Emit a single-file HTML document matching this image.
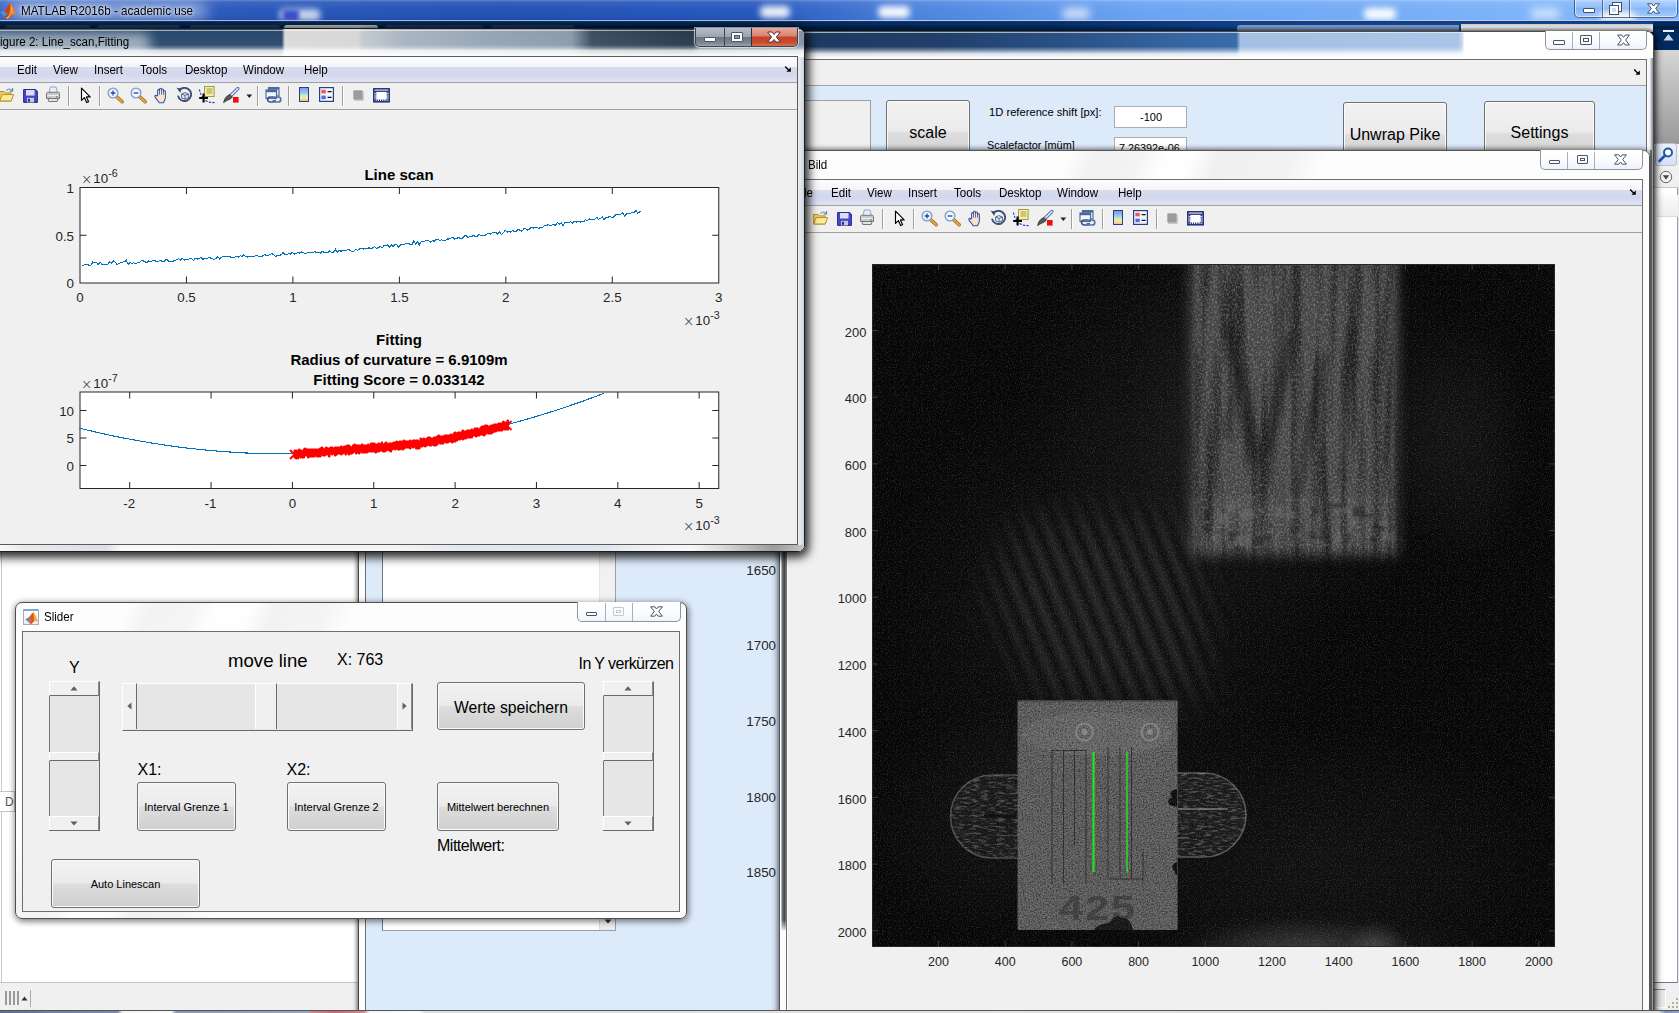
<!DOCTYPE html><html><head><meta charset="utf-8"><title>MATLAB R2016b - academic use</title><style>
*{box-sizing:border-box;margin:0;padding:0}
html,body{width:1679px;height:1013px;overflow:hidden;background:#fff}
body{position:relative;font-family:"Liberation Sans",sans-serif;font-size:12px;color:#000}
.a{position:absolute}
.t{position:absolute;white-space:nowrap;line-height:1}
.ui{font-family:"Liberation Sans","DejaVu Sans",sans-serif;font-size:12.3px;transform:scaleX(.94);transform-origin:0 50%}
.menu{background:linear-gradient(#fdfdfe 0,#f4f5fb 38%,#d9dcef 42%,#d3d7ec 70%,#dfe3f3 100%)}
.btn{position:absolute;border:1px solid #707070;border-radius:3px;background:linear-gradient(#f2f2f2 0,#ebebeb 48%,#dddddd 52%,#cfcfcf 100%);box-shadow:inset 0 0 0 1px #fbfbfb;text-align:center;white-space:nowrap}
.tick{position:absolute;white-space:nowrap;line-height:1;font-size:13.33px;color:#262626}
.sep{position:absolute;width:1px;background:#a0a0a0;box-shadow:1px 0 0 #fff}
</style></head><body>
<div class="a" id="mtitle" style="left:0;top:0;width:1679px;height:22px;background:linear-gradient(90deg,#3563c4 0,#2857bb 12%,#1f4fb4 30%,#2456bb 45%,#4b83de 55%,#69a2f3 68%,#76aef8 85%,#86bafb 100%)"></div>
<div class="a" style="left:0;top:0;width:1679px;height:22px;background:linear-gradient(rgba(255,255,255,.3) 0,rgba(255,255,255,.1) 9%,rgba(255,255,255,.03) 40%,rgba(255,255,255,0) 100%)"></div>
<div class="a" style="left:280px;top:9px;width:40px;height:12px;border-radius:4px;background:#fff;filter:blur(3px);opacity:.75"></div>
<div class="a" style="left:283px;top:10px;width:16px;height:11px;background:#1a2fc0;filter:blur(2px);opacity:.8"></div>
<div class="a" style="left:760px;top:6px;width:30px;height:12px;border-radius:5px;background:#fff;filter:blur(3px);opacity:.9"></div>
<div class="a" style="left:878px;top:6px;width:32px;height:12px;border-radius:5px;background:#fff;filter:blur(3px);opacity:.95"></div>
<div class="a" style="left:1062px;top:8px;width:28px;height:11px;border-radius:5px;background:#fff;filter:blur(4px);opacity:.7"></div>
<div class="a" style="left:1364px;top:8px;width:32px;height:12px;border-radius:5px;background:#fff;filter:blur(3px);opacity:.95"></div>
<div class="a" style="left:1530px;top:8px;width:30px;height:11px;border-radius:5px;background:#fff;filter:blur(4px);opacity:.6"></div>
<div class="a" style="left:1600px;top:11px;width:36px;height:11px;border-radius:6px;background:#fffff0;filter:blur(3px);opacity:.9"></div>
<div class="a" style="left:8px;top:1px;width:200px;height:20px;border-radius:10px;background:#fff;filter:blur(7px);opacity:.42"></div>
<svg class="a" style="left:0px;top:3px" width="17" height="17" viewBox="0 0 17 17"><path d="M0 9.5 L4 7.5 L7.5 11 L4.5 13.5Z" fill="#4a8fd0"/><path d="M4 7.5 C7 5 8.5 1 10.5 0.5 C12 0.5 13.5 6 16.5 12.5 C14.5 11 13 10.5 11.5 12 C10 13.5 9 15.5 7 16 L4.5 13.5 L7.5 11Z" fill="#c9421b"/><path d="M10.5 0.5 C12 0.5 13.5 6 16.5 12.5 C14.5 11 13 10.5 11.5 12 C10 13.5 9 15.5 7 16 C10 11 10.6 5 10.5 0.5Z" fill="#f08a2c"/><path d="M10.6 1.5 C11.6 4 12 7 11.6 11 C11 8 11 4 10.6 1.5Z" fill="#f9c23a"/><path d="M7 16 L6 14.8 C7.5 14 8.5 13 9.5 11.8 C9 13.5 8.3 15 7 16Z" fill="#f9c23a"/></svg>
<div class="t ui" style="left:21px;top:5px;font-size:12.4px;color:#000;text-shadow:0 0 6px rgba(255,255,255,.9),0 0 3px rgba(255,255,255,.8)">MATLAB R2016b - academic use</div>
<div class="a" style="left:1574px;top:-3px;width:104px;height:21px;border:1px solid rgba(40,60,110,.75);border-radius:0 0 5px 5px;background:linear-gradient(rgba(255,255,255,.35),rgba(255,255,255,.12) 45%,rgba(120,170,240,.15) 55%,rgba(255,255,255,.25));box-shadow:inset 0 0 0 1px rgba(255,255,255,.55)"></div>
<div class="a" style="left:1602px;top:0;width:1px;height:17px;background:rgba(40,60,110,.7);box-shadow:1px 0 0 rgba(255,255,255,.5)"></div>
<div class="a" style="left:1629px;top:0;width:1px;height:17px;background:rgba(40,60,110,.7);box-shadow:1px 0 0 rgba(255,255,255,.5)"></div>
<div class="a" style="left:1583px;top:8px;width:12px;height:5px;background:#fff;border:1px solid #44506b;border-radius:1px"></div>
<div class="a" style="left:1613px;top:3px;width:8px;height:8px;background:transparent;border:2px solid #fff;outline:1px solid #44506b"></div>
<div class="a" style="left:1610px;top:6px;width:8px;height:8px;background:#bfe0ff;border:2px solid #fff;outline:1px solid #44506b"></div>
<svg class="a" style="left:1647px;top:3px" width="13" height="11" viewBox="0 0 13 11"><path d="M.6 .8h4.2l1.7 2.2L8.2 .8h4.2L8.7 5.5l3.7 4.7H8.2L6.5 8 4.8 10.2H.6l3.7-4.7Z" fill="#fff" stroke="#44506b" stroke-width="1"/></svg>

<div class="a" style="left:0;top:22px;width:1679px;height:28px;background:#022a5e"></div>
<div class="a" style="left:0;top:20px;width:1679px;height:1px;background:rgba(200,212,238,.85)"></div><div class="a" style="left:0;top:21px;width:1679px;height:1px;background:#1a3566"></div>
<div class="a" style="left:0;top:26px;width:1679px;height:3px;background:#06182e;opacity:.55"></div>
<div class="a" style="left:5px;top:25px;width:85px;height:4px;border-radius:3px 3px 0 0;background:#23405f"></div><div class="a" style="left:97px;top:25px;width:83px;height:4px;border-radius:3px 3px 0 0;background:#23405f"></div><div class="a" style="left:190px;top:25px;width:90px;height:4px;border-radius:3px 3px 0 0;background:#23405f"></div><div class="a" style="left:284px;top:25px;width:94px;height:4px;border-radius:3px 3px 0 0;background:#d9d9d9"></div><div class="a" style="left:385px;top:25px;width:99px;height:4px;border-radius:3px 3px 0 0;background:#23405f"></div><div class="a" style="left:491px;top:25px;width:84px;height:4px;border-radius:3px 3px 0 0;background:#23405f"></div>
<div class="a" style="left:804px;top:22px;width:849px;height:9px;background:linear-gradient(90deg,rgba(15,69,150,0) 0,rgba(15,69,150,.25) 30%,rgba(15,69,150,.9) 52%,rgba(15,69,150,1) 100%)"></div>
<div class="a" style="left:1237px;top:25px;width:222px;height:7px;background:#7f9cc4;border-radius:3px 0 0 0"></div>
<div class="a" style="left:1461px;top:24px;width:192px;height:8px;background:linear-gradient(#c9c9c9,#f4f4f4 40%,#fff)"></div>
<!-- MATLAB right strip -->
<div class="a" style="left:1653px;top:50px;width:26px;height:94px;background:linear-gradient(#d6d6d6,#bdbdbd 40%,#999 100%)"></div>
<div class="a" style="left:1663px;top:30px;width:11px;height:2px;background:#e8eef5"></div>
<svg class="a" style="left:1663px;top:34px" width="11" height="7"><path d="M5.5 0L10.5 6.5H.5Z" fill="#c9d6e4"/></svg>
<div class="a" style="left:1653px;top:144px;width:26px;height:44px;background:#f0f0f0"></div>
<div class="a" style="left:1655px;top:143px;width:22px;height:23px;border:1px solid #b9c3d3;border-radius:3px;background:linear-gradient(#eaf1fb,#d5e1f3)"></div>
<svg class="a" style="left:1657px;top:146px" width="18" height="18" viewBox="0 0 18 18"><circle cx="11" cy="6.5" r="4" fill="#fff" stroke="#1f55b5" stroke-width="2"/><path d="M8 9.5L2.5 15" stroke="#1f55b5" stroke-width="2.6" stroke-linecap="round"/></svg>
<svg class="a" style="left:1659px;top:170px" width="14" height="14" viewBox="0 0 14 14"><circle cx="7" cy="7" r="5.7" fill="#f4f4f4" stroke="#666" stroke-width="1"/><path d="M3.8 5.2h6.4L7 9.8Z" fill="#444"/></svg>
<div class="a" style="left:1653px;top:187px;width:25px;height:796px;background:#fff;border-right:1px solid #8f9bb3;border-bottom:1px solid #6d7b95"></div>
<div class="a" style="left:1653px;top:187px;width:26px;height:1px;background:#c8c8c8"></div>
<div class="a" style="left:1657px;top:195px;width:21px;height:22px;background:linear-gradient(#fbfbfb,#ededed);border-bottom:1px solid #ddd"></div>
<div class="a" style="left:1678px;top:187px;width:1px;height:796px;background:#e8e8e8"></div>
<div class="a" style="left:1653px;top:983px;width:26px;height:27px;background:#f0f0f0"></div>
<div class="a" style="left:1653px;top:989px;width:13px;height:19px;background:#e9e9e9;border-top:1px solid #888;border-right:1px solid #fff;border-bottom:1px solid #fff"></div>
<div class="a" style="left:1676px;top:998px;width:2px;height:2px;background:#b8b094"></div><div class="a" style="left:1672px;top:1002px;width:2px;height:2px;background:#b8b094"></div><div class="a" style="left:1676px;top:1002px;width:2px;height:2px;background:#b8b094"></div><div class="a" style="left:1668px;top:1006px;width:2px;height:2px;background:#b8b094"></div><div class="a" style="left:1672px;top:1006px;width:2px;height:2px;background:#b8b094"></div><div class="a" style="left:1676px;top:1006px;width:2px;height:2px;background:#b8b094"></div>
<!-- MATLAB left-bottom panels -->
<div class="a" style="left:0;top:540px;width:360px;height:443px;background:#fff"></div>
<div class="a" style="left:1px;top:540px;width:1px;height:443px;background:#c9c9c9"></div>
<div class="a" style="left:0;top:791px;width:15px;height:21px;background:#fff;border:1px solid #c4c4c4;border-left:0"></div>
<div class="t" style="left:5px;top:796px;font-size:12px;color:#555">D</div>
<div class="a" style="left:0;top:982px;width:360px;height:1px;background:#c6c6c6"></div>
<div class="a" style="left:0;top:983px;width:360px;height:27px;background:#f0f0f0"></div>
<div class="a" style="left:5px;top:991px;width:15px;height:14px;background:repeating-linear-gradient(90deg,#9a9a9a 0,#9a9a9a 2px,transparent 2px,transparent 4px)"></div>
<svg class="a" style="left:21px;top:996px" width="7" height="5"><path d="M3.5 .5L6.5 4.5H.5Z" fill="#333"/></svg>
<div class="a" style="left:30px;top:990px;width:1px;height:17px;background:#aaa"></div>

<div class="a" id="gui" style="left:358px;top:31px;width:1296px;height:990px;border-radius:7px 7px 0 0;box-shadow:0 0 0 1px rgba(40,40,40,.0),-1px 0 5px rgba(0,0,0,.32),3px 0 6px rgba(0,0,0,.55),0 -1px 4px rgba(0,0,0,.4)"></div>
<div class="a" style="left:358px;top:31px;width:1296px;height:990px;border:1px solid #4a4a4a;border-radius:7px 7px 0 0;background:#fdfdfd;overflow:hidden">
  <div class="a" style="left:0;top:0;width:1296px;height:28px;background:linear-gradient(90deg,#1d3a60 0,#1d3a60 34.5%,#20406b 45%,#2a5286 55%,#3767a2 64%,#3c6ca8 67.7%,#a3c0e3 68%,#a9c5e7 84.8%,#c5d8ef 85.1%,#fff 85.3%,#fff 100%)"></div>
  <div class="a" style="left:0;top:0;width:1296px;height:28px;background:linear-gradient(rgba(255,255,255,0) 0,rgba(255,255,255,0) 52%,rgba(255,255,255,.4) 66%,rgba(255,255,255,.85) 78%,rgba(255,255,255,.97) 90%,#fff 100%)"></div>
  <div class="a" style="left:0;top:0;width:1296px;height:1px;background:rgba(255,255,255,.6)"></div>
</div>
<!-- right frame two-tone -->
<div class="a" style="left:1647px;top:58px;width:6px;height:92px;background:linear-gradient(90deg,#fff 0,#f6f8fb 35%,#dde1e8 55%,#a9adb4 78%,#85888e 100%)"></div><div class="a" style="left:1647px;top:150px;width:6px;height:860px;background:linear-gradient(90deg,#fff 0,#f4f6fa 30%,#c9cdd4 45%,#7a7a7a 55%,#686868 76%,#a0a0a0 86%,#b4b4b4 100%)"></div>
<!-- caption buttons -->
<div class="a" style="left:1545px;top:31px;width:102px;height:19px;border:1px solid #8d93a0;border-top:0;border-radius:0 0 5px 5px;background:linear-gradient(#fff,#fbfcfe 50%,#eef2f9 100%)"></div>
<div class="a" style="left:1572px;top:32px;width:1px;height:17px;background:#a9aeb9"></div>
<div class="a" style="left:1599px;top:32px;width:1px;height:17px;background:#a9aeb9"></div>
<div class="a" style="left:1553px;top:40px;width:12px;height:5px;background:#fcfcfc;border:1px solid #4c5366;border-radius:1px"></div>
<div class="a" style="left:1580px;top:35px;width:12px;height:10px;border:1px solid #4c5366;border-radius:1px;background:#fcfcfc"></div>
<div class="a" style="left:1583px;top:38px;width:6px;height:4px;border:1px solid #4c5366;background:#fff"></div>
<svg class="a" style="left:1617px;top:34px" width="13" height="12" viewBox="0 0 13 12"><path d="M.6 1h4.2l1.7 2.3L8.2 1h4.2L8.7 6l3.7 5H8.2L6.5 8.7 4.8 11H.6l3.7-5Z" fill="#fdfdfd" stroke="#4c5366" stroke-width="1"/></svg>
<!-- client -->
<div class="a" style="left:365px;top:59px;width:1282px;height:960px;border:1px solid #6e6e6e;background:#ddeafa"></div>
<div class="a" style="left:366px;top:60px;width:1280px;height:25px;background:#f0f0f0"></div>
<div class="a" style="left:366px;top:85px;width:1280px;height:1px;background:#a0a0a0"></div>
<svg class="a" style="left:1633px;top:68px" width="8" height="8" viewBox="0 0 8 8"><path d="M1.2 1.6L5 5.4" stroke="#000" stroke-width="1.4" fill="none"/><path d="M2.4 6.8H6.8V2.4Z" fill="#000"/></svg>
<!-- panel + buttons -->
<div class="a" style="left:700px;top:100px;width:171px;height:60px;background:#f0f0f0;border:1px solid #fff;box-shadow:-1px -1px 0 #a0a0a0 inset, 0 0 0 1px #a0a0a0 inset;border-right:1px solid #fff"></div>
<div class="a" style="left:700px;top:100px;width:171px;height:60px;border-top:1px solid #a0a0a0;border-right:1px solid #a0a0a0;background:#f0f0f0"></div>
<div class="btn" style="left:886px;top:100px;width:84px;height:64px;font-size:16px;line-height:64px">scale</div>
<div class="t" style="left:989px;top:107px;font-size:11.2px">1D reference shift [px]:</div>
<div class="a" style="left:1114px;top:106px;width:73px;height:22px;background:#fff;border:1px solid #abadb3"></div>
<div class="t" style="left:1140px;top:112px;font-size:11px">-100</div>
<div class="t" style="left:987px;top:140px;font-size:10.9px">Scalefactor [müm]</div>
<div class="a" style="left:1114px;top:137px;width:73px;height:22px;background:#fff;border:1px solid #abadb3"></div>
<div class="t" style="left:1119px;top:143px;font-size:10.8px">7.26392e-06</div>
<div class="btn" style="left:1343px;top:102px;width:104px;height:64px;font-size:16px;line-height:64px">Unwrap Pike</div>
<div class="btn" style="left:1484px;top:101px;width:111px;height:64px;font-size:16px;line-height:62px">Settings</div>
<!-- left part below fig2 -->
<div class="a" style="left:382px;top:540px;width:234px;height:391px;background:#fff;border:1px solid #6f7684;border-right-color:#9aa0ab;border-bottom-color:#9aa0ab"></div>
<div class="a" style="left:599px;top:540px;width:16px;height:375px;background:#f1f1f1;border-left:1px solid #e4e4e4"></div>
<div class="a" style="left:599px;top:915px;width:16px;height:15px;background:linear-gradient(#f6f6f6,#ebebeb);border-left:1px solid #dcdcdc"></div>
<svg class="a" style="left:603.5px;top:919px" width="8" height="5"><path d="M.5 .5H7.5L4 4.5Z" fill="#333"/></svg>
<div class="tick" style="right:903px;top:564px">1650</div><div class="tick" style="right:903px;top:639px">1700</div><div class="tick" style="right:903px;top:715px">1750</div><div class="tick" style="right:903px;top:791px">1800</div><div class="tick" style="right:903px;top:866px">1850</div>
<div class="a" style="left:779px;top:150px;width:871px;height:871px;border-radius:7px 7px 0 0;box-shadow:-2px 0 6px rgba(0,0,0,.4),0 -1px 4px rgba(0,0,0,.35)"></div>
<div class="a" style="left:779px;top:150px;width:871px;height:871px;border:1px solid #555;border-radius:7px 7px 0 0;background:#fdfdfd;overflow:hidden">
  <div class="a" style="left:0;top:0;width:871px;height:29px;background:linear-gradient(115deg,#fdfdfd 0,#fdfdfd 33%,#f1f1f1 36%,#f3f3f3 41%,#fefefe 44%,#fefefe 47%,#f0f0f0 50%,#f2f2f2 58%,#fdfdfd 62%,#fdfdfd 100%)"></div>
  <div class="a" style="left:1px;top:391px;width:5px;height:388px;background:linear-gradient(90deg,#d9dbde 0,#70757d 25%,#3c3e42 80%,#9a9a9a 100%)"></div>
  <div class="a" style="left:1px;top:769px;width:5px;height:12px;background:linear-gradient(rgba(255,255,255,0),#fafafa)"></div>
</div>
<div class="t ui" style="left:808px;top:159px">Bild</div>
<!-- caption buttons -->
<div class="a" style="left:1540px;top:150px;width:103px;height:20px;border:1px solid #8d93a0;border-top:0;border-radius:0 0 5px 5px;background:linear-gradient(#fff,#fbfcfe 50%,#eef2f9 100%)"></div>
<div class="a" style="left:1567px;top:152px;width:1px;height:17px;background:#a9aeb9"></div>
<div class="a" style="left:1594px;top:152px;width:1px;height:17px;background:#a9aeb9"></div>
<div class="a" style="left:1549px;top:160px;width:11px;height:4px;background:#fcfcfc;border:1px solid #4c5366;border-radius:1px"></div>
<div class="a" style="left:1577px;top:155px;width:11px;height:9px;border:1px solid #4c5366;border-radius:1px;background:#fcfcfc"></div>
<div class="a" style="left:1580px;top:158px;width:5px;height:3px;border:1px solid #4c5366;background:#fff"></div>
<svg class="a" style="left:1614px;top:154px" width="13" height="11" viewBox="0 0 13 11"><path d="M.6 .8h4.2l1.7 2.2L8.2 .8h4.2L8.7 5.5l3.7 4.7H8.2L6.5 8 4.8 10.2H.6l3.7-4.7Z" fill="#fdfdfd" stroke="#4c5366" stroke-width="1"/></svg>
<!-- client -->
<div class="a" style="left:786px;top:179px;width:857px;height:840px;border:1px solid #6e6e6e;background:#f0f0f0"></div>
<div class="a" style="left:787px;top:180px;width:1px;height:830px;background:#fff"></div>
<div class="a menu" style="left:787px;top:180px;width:855px;height:25px"></div>
<div class="a" style="left:787px;top:205px;width:855px;height:1px;background:#a0a0a0"></div>
<div class="a" style="left:787px;top:232px;width:855px;height:1px;background:#a0a0a0"></div>
<div class="t ui" style="left:803.5px;top:187px">le</div>
<div class="t ui" style="left:830.5px;top:187px">Edit</div><div class="t ui" style="left:867px;top:187px">View</div><div class="t ui" style="left:907.5px;top:187px">Insert</div><div class="t ui" style="left:953.5px;top:187px">Tools</div><div class="t ui" style="left:998.5px;top:187px">Desktop</div><div class="t ui" style="left:1057px;top:187px">Window</div><div class="t ui" style="left:1118px;top:187px">Help</div>
<svg class="a" style="left:1629px;top:188px" width="8" height="8" viewBox="0 0 8 8"><path d="M1.2 1.6L5 5.4" stroke="#000" stroke-width="1.4" fill="none"/><path d="M2.4 6.8H6.8V2.4Z" fill="#000"/></svg>
<div class="a" style="left:800px;top:209px;width:2px;height:20px;background:#3f3f8f;opacity:.5"></div>
<svg class="a" style="left:813px;top:210px" width="16" height="16" viewBox="0 0 16 16"><path d="M.6 4.5h4.6l1.3 1.4H12V14H.6Z" fill="#f0cf62" stroke="#b98f1f" stroke-width="1"/><path d="M.8 14L3 7.6H14.6L12.3 14Z" fill="#fbe9a0" stroke="#b98f1f" stroke-width="1"/><path d="M7.5 3.6C9 1.6 11.6 1.4 13 3.6M13.6 .9v3.2h-3.1" fill="none" stroke="#6a8fc0" stroke-width="1.2"/></svg><svg class="a" style="left:837px;top:211px" width="15" height="16" viewBox="0 0 15 16"><path d="M.6 1.5H12.6L14.4 3.2V14.4H.6Z" fill="#4545c9" stroke="#2a2a86" stroke-width="1"/><rect x="3" y="2" width="8.5" height="5.5" fill="#f2f2ff"/><rect x="3" y="2" width="8.5" height="5.5" fill="#9a9ae0" opacity=".25"/><rect x="4" y="9.8" width="7" height="4.6" fill="#c9c9dc"/><rect x="5" y="10.8" width="2" height="3" fill="#2a2a86"/></svg><svg class="a" style="left:859px;top:209px" width="16" height="17" viewBox="0 0 16 17"><path d="M4.2 6.5L5.3 1H11L12.5 6.5Z" fill="#e6f0fb" stroke="#93a6bf" stroke-width="1"/><path d="M1.5 7.5C1.5 6 3 6.3 8 6.3S14.5 6 14.5 7.5V12.5H1.5Z" fill="#c9c9c9" stroke="#767676" stroke-width="1"/><path d="M2.5 9.5h11" stroke="#eee" stroke-width="1"/><path d="M3 12.5h10l-.8 3H3.8Z" fill="#e4e4e4" stroke="#767676" stroke-width="1"/><rect x="11.2" y="10.3" width="1.8" height="1.3" fill="#4a4"/></svg><div class="sep" style="left:882px;top:209px;height:20px"></div><svg class="a" style="left:894px;top:210px" width="12" height="17" viewBox="0 0 12 17"><path d="M1.5 1.2V13.4L4.4 10.6L6.6 15.6L8.6 14.7L6.4 9.9H10.2Z" fill="#fff" stroke="#000" stroke-width="1.15" stroke-linejoin="round"/></svg><div class="sep" style="left:913px;top:209px;height:20px"></div><svg class="a" style="left:921px;top:210px" width="17" height="17" viewBox="0 0 17 17"><path d="M9.2 9.2L15.2 14.8" stroke="#8a6a2a" stroke-width="3.4" stroke-linecap="round"/><path d="M9.2 9.2L15.2 14.8" stroke="#e8a33a" stroke-width="2.2" stroke-linecap="round"/><circle cx="6" cy="6" r="4.9" fill="#e3effc" stroke="#7d9dcb" stroke-width="1.3"/><circle cx="6" cy="6" r="3.4" fill="#f4f9ff"/><path d="M3.6 6h4.8M6 3.6v4.8" stroke="#2546a5" stroke-width="1.3"/></svg><svg class="a" style="left:944px;top:210px" width="17" height="17" viewBox="0 0 17 17"><path d="M9.2 9.2L15.2 14.8" stroke="#8a6a2a" stroke-width="3.4" stroke-linecap="round"/><path d="M9.2 9.2L15.2 14.8" stroke="#e8a33a" stroke-width="2.2" stroke-linecap="round"/><circle cx="6" cy="6" r="4.9" fill="#e3effc" stroke="#7d9dcb" stroke-width="1.3"/><circle cx="6" cy="6" r="3.4" fill="#f4f9ff"/><path d="M3.6 6h4.8" stroke="#2546a5" stroke-width="1.3"/></svg><svg class="a" style="left:967px;top:209.5px" width="17" height="17" viewBox="0 0 17 17"><path d="M4.6 8.8V3.6c0-1.3 1.9-1.3 1.9 0V2.3c0-1.3 2-1.3 2 0V2.9c0-1.3 2-1.3 2 0V4.6c0-1.2 1.9-1.2 1.9 0v5.6c0 2.7-1.2 3.6-1.9 5.6H6.2C5.3 13.6 2.6 11.6 1.9 9.8c-.5-1.2 1-1.9 1.8-.9Z" fill="#fbe0cc" stroke="#2d55a5" stroke-width="1.05" stroke-linejoin="round"/><path d="M6.5 3.6v4M8.5 3v4.6M10.5 4.6v3" stroke="#2d55a5" stroke-width=".8" fill="none"/></svg><svg class="a" style="left:990px;top:210px" width="17" height="17" viewBox="0 0 17 17"><path d="M3.6 3A6.6 6.6 0 1 1 2 8.6" fill="none" stroke="#3b4f77" stroke-width="1.9"/><path d="M.6 .8L5.6 1.6 4.2 6Z" fill="#3b4f77"/><path d="M5.6 7L9 5.6l3.4 1.4v3.8L9 12.2 5.6 10.8Z" fill="#e8eef8" stroke="#51668f" stroke-width="1"/><path d="M5.6 7L9 8.4l3.4-1.4M9 8.4v3.8" fill="none" stroke="#51668f" stroke-width="1"/></svg><svg class="a" style="left:1012px;top:209px" width="18" height="18" viewBox="0 0 18 18"><rect x="6.5" y=".5" width="9.6" height="10" fill="#f5f0a6" stroke="#a39a45" stroke-width="1"/><path d="M8.5 3h5.8M8.5 5h5.8M8.5 7h5.8" stroke="#a39a45" stroke-width="1"/><path d="M1.4 3.5C2.2 7 3.3 9.5 5 11.5" fill="none" stroke="#2222dd" stroke-width="1.1" stroke-dasharray="2 1.4"/><path d="M7.5 14.6C10 16 13 16.6 16.5 16.6" fill="none" stroke="#2222dd" stroke-width="1.1" stroke-dasharray="2.4 1.2"/><path d="M5.6 7.6v8.8M1.2 12h8.8" stroke="#000" stroke-width="2.1"/></svg><svg class="a" style="left:1036px;top:210px" width="18" height="17" viewBox="0 0 18 17"><path d="M15.8 1.6L8.6 8.8" stroke="#3f5f9f" stroke-width="3.4" stroke-linecap="round"/><path d="M15.8 1.6L8.6 8.8" stroke="#d9e6fb" stroke-width="1.8" stroke-linecap="round" stroke-dasharray="1.6 1.3"/><path d="M8 7.6L10.4 10C8.4 13 5.6 12.4 1.6 15.6 2.4 12 4 9 8 7.6Z" fill="#5a5a5a" stroke="#2c2c2c" stroke-width=".8"/><rect x="11" y="10" width="5.6" height="5.6" fill="#f20d0d"/></svg><svg class="a" style="left:1060px;top:217px" width="7" height="5" viewBox="0 0 7 5"><path d="M.4 .5H6.2L3.3 4Z" fill="#222"/></svg><div class="sep" style="left:1071px;top:209px;height:20px"></div><svg class="a" style="left:1079px;top:210px" width="17" height="17" viewBox="0 0 17 17"><rect x="3.5" y=".6" width="10.5" height="8.4" fill="#dfe9f6" stroke="#4a66a0" stroke-width="1.1"/><rect x="3.5" y=".6" width="10.5" height="2" fill="#4a66a0"/><rect x="1" y="3" width="10.5" height="8.4" fill="#f4f8fd" stroke="#4a66a0" stroke-width="1.1"/><rect x="1" y="3" width="10.5" height="2.2" fill="#4a66a0"/><rect x="2.6" y="10" width="7.6" height="5" rx="2.5" fill="none" stroke="#395587" stroke-width="1.7"/><rect x="8.2" y="10" width="7.6" height="5" rx="2.5" fill="none" stroke="#5576ad" stroke-width="1.7"/><path d="M6 12.5h6" stroke="#dfe9f6" stroke-width="1"/></svg><div class="sep" style="left:1102px;top:209px;height:20px"></div><div class="a" style="left:1113px;top:210px;width:10px;height:15px;border:1px solid #2a3f8a;background:linear-gradient(#8f8fe8,#8fd0ee 38%,#d8ecb8 60%,#f6e79a 78%,#f6bca0)"></div><svg class="a" style="left:1133px;top:210px" width="15" height="15" viewBox="0 0 15 15"><rect x=".6" y=".6" width="13.8" height="13.8" fill="#f2f6fc" stroke="#2a3f8a" stroke-width="1.2"/><rect x="2.4" y="2.8" width="4.4" height="3.6" fill="#ee5555"/><rect x="2.4" y="8.6" width="4.4" height="3.6" fill="#5a6be0"/><path d="M8.6 4.6h4M8.6 10.4h4" stroke="#111" stroke-width="1.3"/></svg><div class="sep" style="left:1156px;top:209px;height:20px"></div><div class="a" style="left:1167px;top:213px;width:10px;height:10px;background:#9b9b9b;border:1px solid #b4b4b4;border-radius:1.5px;box-shadow:1px 1px 0 #c8c8c8"></div><svg class="a" style="left:1187px;top:211px" width="17" height="15" viewBox="0 0 17 15"><rect x=".8" y=".8" width="15.4" height="13" fill="#fff" stroke="#1c2d78" stroke-width="1.5"/><path d="M1 3.2h15" stroke="#1c2d78" stroke-width="1.3"/><path d="M2.6 4v8M14.4 4v8" stroke="#1c2d78" stroke-width="1.6" stroke-dasharray="1.2 1"/><path d="M1.5 12.2h14" stroke="#1c2d78" stroke-width="1.4" stroke-dasharray="1.2 1"/></svg><svg class="a" style="left:872px;top:264px" width="683" height="683" viewBox="0 0 683 683"><defs>
<filter id="nz" x="0" y="0" width="100%" height="100%"><feTurbulence type="fractalNoise" baseFrequency="0.85" numOctaves="2" seed="3" result="n"/><feColorMatrix in="n" type="matrix" values="0 0 0 0 1  0 0 0 0 1  0 0 0 0 1  3.2 0 0 0 -1.55"/></filter>
<filter id="nz2" x="0" y="0" width="100%" height="100%"><feTurbulence type="fractalNoise" baseFrequency="0.7" numOctaves="2" seed="11" result="n"/><feColorMatrix in="n" type="matrix" values="0 0 0 0 0  0 0 0 0 0  0 0 0 0 0  2.2 0 0 0 -0.8"/></filter>
<filter id="streak" x="0" y="0" width="100%" height="100%"><feTurbulence type="fractalNoise" baseFrequency="0.10 0.007" numOctaves="2" seed="5" result="n"/><feColorMatrix in="n" type="matrix" values="0 0 0 0 0  0 0 0 0 0  0 0 0 0 0  3.0 0 0 0 -1.15"/></filter>
<filter id="nz4" x="0" y="0" width="100%" height="100%"><feTurbulence type="fractalNoise" baseFrequency="0.55 0.4" numOctaves="2" seed="8" result="n"/><feColorMatrix in="n" type="matrix" values="0 0 0 0 1  0 0 0 0 1  0 0 0 0 1  3 0 0 0 -1.3"/></filter><filter id="b3" x="-50%" y="-50%" width="200%" height="200%"><feGaussianBlur stdDeviation="3"/></filter>
<filter id="b1" x="-50%" y="-50%" width="200%" height="200%"><feGaussianBlur stdDeviation="1.3"/></filter><filter id="b6" x="-50%" y="-50%" width="200%" height="200%"><feGaussianBlur stdDeviation="6"/></filter>
<clipPath id="cimg"><rect x="0" y="0" width="683" height="683"/></clipPath>
<clipPath id="cbr"><rect x="305" y="0" width="230" height="320"/></clipPath>
<clipPath id="clobes"><path d="M150 511H120A41.5 41.5 0 0 0 120 594H150ZM300 509H332A42 42 0 0 1 332 593H300Z"/></clipPath><filter id="nz3" x="0" y="0" width="100%" height="100%"><feTurbulence type="fractalNoise" baseFrequency="0.12 0.45" numOctaves="3" seed="21" result="n"/><feColorMatrix in="n" type="matrix" values="0 0 0 0 .8  0 0 0 0 .8  0 0 0 0 .8  4 0 0 0 -1.9"/></filter><clipPath id="cchip"><rect x="145" y="436" width="160" height="230"/></clipPath>
<radialGradient id="rg1"><stop offset="0" stop-color="#fff" stop-opacity=".04"/><stop offset=".55" stop-color="#fff" stop-opacity=".022"/><stop offset="1" stop-color="#fff" stop-opacity="0"/></radialGradient>
<radialGradient id="rg3"><stop offset="0" stop-color="#fff" stop-opacity=".16"/><stop offset=".5" stop-color="#fff" stop-opacity=".08"/><stop offset="1" stop-color="#fff" stop-opacity="0"/></radialGradient><radialGradient id="rg2"><stop offset="0" stop-color="#fff" stop-opacity=".05"/><stop offset=".5" stop-color="#fff" stop-opacity=".03"/><stop offset="1" stop-color="#fff" stop-opacity="0"/></radialGradient>
<linearGradient id="brx" x1="0" y1="0" x2="1" y2="0"><stop offset="0" stop-color="#fff" stop-opacity="0"/><stop offset=".1" stop-color="#fff" stop-opacity="1"/><stop offset=".9" stop-color="#fff" stop-opacity="1"/><stop offset="1" stop-color="#fff" stop-opacity="0"/></linearGradient>
<linearGradient id="bry" x1="0" y1="0" x2="0" y2="1"><stop offset="0" stop-color="#000" stop-opacity="0"/><stop offset=".9" stop-color="#0b0b0b" stop-opacity="0"/><stop offset="1" stop-color="#0b0b0b" stop-opacity="1"/></linearGradient>
<mask id="mbr"><rect x="318" y="-30" width="208" height="322" fill="#fff" filter="url(#b6)"/></mask>
<linearGradient id="fr" gradientUnits="userSpaceOnUse" x1="0" y1="0" x2="16.3" y2="-6.7" spreadMethod="repeat"><stop offset="0" stop-color="#fff" stop-opacity="0"/><stop offset=".5" stop-color="#fff" stop-opacity=".1"/><stop offset="1" stop-color="#fff" stop-opacity="0"/></linearGradient>
<radialGradient id="frm" cx="225" cy="350" r="175" gradientUnits="userSpaceOnUse" gradientTransform="translate(225 350) rotate(22) scale(.75 1.1) translate(-225 -350)"><stop offset="0" stop-color="#fff"/><stop offset=".6" stop-color="#fff" stop-opacity=".8"/><stop offset="1" stop-color="#fff" stop-opacity="0"/></radialGradient>
<filter id="b20" x="-50%" y="-50%" width="200%" height="200%"><feGaussianBlur stdDeviation="22"/></filter><mask id="mfr"><path d="M150 250L300 250L340 330L330 440L170 440L110 330Z" fill="#fff" filter="url(#b20)"/></mask>
</defs>
<g clip-path="url(#cimg)">
<rect width="683" height="683" fill="#060606"/>
<!-- soft glows -->
<ellipse cx="235" cy="345" rx="230" ry="230" fill="url(#rg1)"/>
<ellipse cx="330" cy="130" rx="190" ry="170" fill="url(#rg1)"/>
<ellipse cx="590" cy="175" rx="70" ry="130" fill="url(#rg2)"/>
<ellipse cx="440" cy="600" rx="260" ry="140" fill="url(#rg1)"/>
<ellipse cx="450" cy="690" rx="170" ry="45" fill="url(#rg2)"/>
<ellipse cx="430" cy="688" rx="120" ry="34" fill="url(#rg3)"/><ellipse cx="505" cy="686" rx="30" ry="30" fill="url(#rg3)"/>
<ellipse cx="130" cy="560" rx="140" ry="120" fill="url(#rg1)"/>
<!-- bright textured region -->
<ellipse cx="422" cy="150" rx="170" ry="220" fill="url(#rg2)"/>
<g mask="url(#mbr)">
<rect x="300" y="0" width="240" height="320" fill="#424242"/>
<rect x="300" y="232" width="240" height="52" fill="#484848"/>
<g clip-path="url(#cbr)"><rect x="300" y="0" width="240" height="310" fill="#000" filter="url(#streak)" opacity=".5"/><rect x="300" y="0" width="240" height="320" filter="url(#nz4)" opacity=".22"/></g>
<g filter="url(#b1)"><rect x="442" y="265" width="12" height="10" fill="#1c1c1c" opacity=".45"/><rect x="463" y="271" width="4" height="7" fill="#6a6a6a" opacity=".45"/><rect x="500" y="261" width="13" height="5" fill="#1c1c1c" opacity=".45"/><rect x="414" y="247" width="9" height="7" fill="#6a6a6a" opacity=".45"/><rect x="332" y="246" width="7" height="9" fill="#1c1c1c" opacity=".45"/><rect x="468" y="244" width="12" height="5" fill="#6a6a6a" opacity=".45"/><rect x="441" y="243" width="4" height="9" fill="#1c1c1c" opacity=".45"/><rect x="368" y="246" width="14" height="9" fill="#6a6a6a" opacity=".45"/><rect x="382" y="273" width="9" height="8" fill="#1c1c1c" opacity=".45"/><rect x="367" y="272" width="11" height="10" fill="#6a6a6a" opacity=".45"/><rect x="491" y="249" width="8" height="5" fill="#1c1c1c" opacity=".45"/><rect x="356" y="240" width="7" height="8" fill="#6a6a6a" opacity=".45"/><rect x="331" y="262" width="7" height="6" fill="#1c1c1c" opacity=".45"/><rect x="477" y="255" width="7" height="7" fill="#6a6a6a" opacity=".45"/><rect x="457" y="240" width="14" height="4" fill="#1c1c1c" opacity=".45"/><rect x="465" y="268" width="4" height="9" fill="#6a6a6a" opacity=".45"/><rect x="396" y="259" width="4" height="4" fill="#1c1c1c" opacity=".45"/><rect x="363" y="272" width="6" height="9" fill="#6a6a6a" opacity=".45"/><rect x="497" y="272" width="7" height="6" fill="#1c1c1c" opacity=".45"/><rect x="424" y="266" width="5" height="8" fill="#6a6a6a" opacity=".45"/><rect x="474" y="269" width="4" height="10" fill="#1c1c1c" opacity=".45"/><rect x="346" y="250" width="10" height="10" fill="#6a6a6a" opacity=".45"/><rect x="391" y="271" width="9" height="6" fill="#1c1c1c" opacity=".45"/><rect x="387" y="244" width="5" height="5" fill="#6a6a6a" opacity=".45"/><rect x="454" y="274" width="6" height="4" fill="#1c1c1c" opacity=".45"/><rect x="508" y="257" width="8" height="5" fill="#6a6a6a" opacity=".45"/><rect x="437" y="268" width="9" height="7" fill="#1c1c1c" opacity=".45"/><rect x="340" y="271" width="4" height="7" fill="#6a6a6a" opacity=".45"/><rect x="481" y="243" width="11" height="10" fill="#1c1c1c" opacity=".45"/><rect x="443" y="266" width="5" height="7" fill="#6a6a6a" opacity=".45"/><rect x="357" y="268" width="7" height="7" fill="#1c1c1c" opacity=".45"/><rect x="510" y="269" width="14" height="7" fill="#6a6a6a" opacity=".45"/><rect x="418" y="264" width="9" height="6" fill="#1c1c1c" opacity=".45"/><rect x="403" y="243" width="8" height="10" fill="#6a6a6a" opacity=".45"/></g><path d="M356 60L385 200" stroke="#0a0a0a" stroke-width="9" opacity="0.55" filter="url(#b3)"/><path d="M420 70L395 190" stroke="#0a0a0a" stroke-width="8" opacity="0.5" filter="url(#b3)"/><path d="M452 90L425 230" stroke="#0a0a0a" stroke-width="7" opacity="0.45" filter="url(#b3)"/><path d="M372 100L352 175" stroke="#0a0a0a" stroke-width="6" opacity="0.4" filter="url(#b3)"/><path d="M480 60L470 220" stroke="#0a0a0a" stroke-width="6" opacity="0.35" filter="url(#b3)"/><path d="M405 40L412 120" stroke="#0a0a0a" stroke-width="5" opacity="0.35" filter="url(#b3)"/></g>
<!-- diagonal fringes -->
<g mask="url(#mfr)"><rect x="60" y="170" width="340" height="340" fill="url(#fr)"/></g>
<!-- lobes -->
<path d="M150 511H120A41.5 41.5 0 0 0 120 594H150Z" fill="#161616" stroke="#484848" stroke-width="1.6"/>
<path d="M300 509H332A42 42 0 0 1 332 593H300Z" fill="#181818" stroke="#555" stroke-width="1.6"/>
<g clip-path="url(#clobes)"><rect x="70" y="500" width="320" height="100" filter="url(#nz3)" opacity=".24"/></g>
<path d="M306 545h50" stroke="#9a9a9a" stroke-width="1.2"/><path d="M112 552h36" stroke="#0c0c0c" stroke-width="3"/>
<rect x="145.5" y="436.5" width="160" height="229.5" fill="#696969"/>
<g clip-path="url(#cchip)"><rect x="145" y="436" width="160" height="230" filter="url(#nz2)" opacity=".5"/>
<ellipse cx="225" cy="470" rx="75" ry="22" fill="#fff" opacity=".05"/>
<circle cx="212.5" cy="468" r="8.5" fill="none" stroke="#808080" stroke-width="2.2"/><circle cx="212.5" cy="468" r="3" fill="#858585"/><circle cx="212.5" cy="468" r="14" fill="none" stroke="#6c6c6c" stroke-width="1.5" opacity=".7"/>
<circle cx="278" cy="468" r="8.5" fill="none" stroke="#808080" stroke-width="2.2"/><circle cx="278" cy="468" r="3" fill="#858585"/><circle cx="278" cy="468" r="14" fill="none" stroke="#6c6c6c" stroke-width="1.5" opacity=".7"/>
<circle cx="212.5" cy="468" r="17" fill="none" stroke="#fff" stroke-width="1.2" opacity="0.056"/><circle cx="212.5" cy="468" r="21" fill="none" stroke="#fff" stroke-width="1.2" opacity="0.048"/><circle cx="212.5" cy="468" r="25" fill="none" stroke="#fff" stroke-width="1.2" opacity="0.040"/><circle cx="212.5" cy="468" r="29" fill="none" stroke="#fff" stroke-width="1.2" opacity="0.032"/><circle cx="212.5" cy="468" r="33" fill="none" stroke="#fff" stroke-width="1.2" opacity="0.024"/><circle cx="212.5" cy="468" r="37" fill="none" stroke="#fff" stroke-width="1.2" opacity="0.020"/><circle cx="212.5" cy="468" r="41" fill="none" stroke="#fff" stroke-width="1.2" opacity="0.020"/><circle cx="212.5" cy="468" r="45" fill="none" stroke="#fff" stroke-width="1.2" opacity="0.020"/><circle cx="278" cy="468" r="17" fill="none" stroke="#fff" stroke-width="1.2" opacity="0.056"/><circle cx="278" cy="468" r="21" fill="none" stroke="#fff" stroke-width="1.2" opacity="0.048"/><circle cx="278" cy="468" r="25" fill="none" stroke="#fff" stroke-width="1.2" opacity="0.040"/><circle cx="278" cy="468" r="29" fill="none" stroke="#fff" stroke-width="1.2" opacity="0.032"/><circle cx="278" cy="468" r="33" fill="none" stroke="#fff" stroke-width="1.2" opacity="0.024"/><circle cx="278" cy="468" r="37" fill="none" stroke="#fff" stroke-width="1.2" opacity="0.020"/><circle cx="278" cy="468" r="41" fill="none" stroke="#fff" stroke-width="1.2" opacity="0.020"/><circle cx="278" cy="468" r="45" fill="none" stroke="#fff" stroke-width="1.2" opacity="0.020"/><path d="M180 486.5h34M180 486v134M191.5 486v134M202.5 486v96M214 486v134M236 483v131M248 483v131M259.5 483v131M237 615h34M271 588v32" stroke="#262626" stroke-width="1" fill="none" opacity=".85"/>
<text x="186" y="656" font-family="Liberation Mono, monospace" font-size="36" font-weight="bold" fill="#2e2e2e" opacity=".6" textLength="78" lengthAdjust="spacingAndGlyphs">425</text>
<path d="M222 666c4-7 10-5 16-8 4-6 8-8 11-4 6-1 10 3 12 12Z" fill="#171717"/>
<path d="M305.5 525c-7 1-9 5-5 8-6 2-6 8 1 9 2 1 3 0 4 0ZM305.5 598c-5 1-7 6-3 9 0 3 1 4 3 4Z" fill="#0e0e0e"/>
<path d="M145.5 436.5h160" stroke="#3c3c3c" stroke-width="2"/>
</g>
<path d="M221.5 488V608" stroke="#1be21b" stroke-width="2.2"/>
<path d="M255 488V608" stroke="#1be21b" stroke-width="1.5"/>
<rect width="683" height="683" filter="url(#nz)" opacity=".13"/>
</g>
<rect x=".5" y=".5" width="682" height="682" fill="none" stroke="#262626" stroke-width="1"/>
<path d="M66.5 683v-6M66.5 0v6M0 66.5h6M683 66.5h-6" stroke="#3c3c3c" stroke-width="1"/><path d="M133.2 683v-6M133.2 0v6M0 133.2h6M683 133.2h-6" stroke="#3c3c3c" stroke-width="1"/><path d="M199.9 683v-6M199.9 0v6M0 199.9h6M683 199.9h-6" stroke="#3c3c3c" stroke-width="1"/><path d="M266.6 683v-6M266.6 0v6M0 266.6h6M683 266.6h-6" stroke="#3c3c3c" stroke-width="1"/><path d="M333.3 683v-6M333.3 0v6M0 333.3h6M683 333.3h-6" stroke="#3c3c3c" stroke-width="1"/><path d="M400.0 683v-6M400.0 0v6M0 400.0h6M683 400.0h-6" stroke="#3c3c3c" stroke-width="1"/><path d="M466.7 683v-6M466.7 0v6M0 466.7h6M683 466.7h-6" stroke="#3c3c3c" stroke-width="1"/><path d="M533.4 683v-6M533.4 0v6M0 533.4h6M683 533.4h-6" stroke="#3c3c3c" stroke-width="1"/><path d="M600.1 683v-6M600.1 0v6M0 600.1h6M683 600.1h-6" stroke="#3c3c3c" stroke-width="1"/><path d="M666.8 683v-6M666.8 0v6M0 666.8h6M683 666.8h-6" stroke="#3c3c3c" stroke-width="1"/></svg><div class="tick" style="right:812.7px;top:326.6px;font-size:12.9px">200</div><div class="tick" style="left:908.5px;width:60px;text-align:center;top:955.5px;font-size:12.5px">200</div><div class="tick" style="right:812.7px;top:393.3px;font-size:12.9px">400</div><div class="tick" style="left:975.2px;width:60px;text-align:center;top:955.5px;font-size:12.5px">400</div><div class="tick" style="right:812.7px;top:460.0px;font-size:12.9px">600</div><div class="tick" style="left:1041.9px;width:60px;text-align:center;top:955.5px;font-size:12.5px">600</div><div class="tick" style="right:812.7px;top:526.7px;font-size:12.9px">800</div><div class="tick" style="left:1108.6px;width:60px;text-align:center;top:955.5px;font-size:12.5px">800</div><div class="tick" style="right:812.7px;top:593.4px;font-size:12.9px">1000</div><div class="tick" style="left:1175.3px;width:60px;text-align:center;top:955.5px;font-size:12.5px">1000</div><div class="tick" style="right:812.7px;top:660.1px;font-size:12.9px">1200</div><div class="tick" style="left:1242.0px;width:60px;text-align:center;top:955.5px;font-size:12.5px">1200</div><div class="tick" style="right:812.7px;top:726.8px;font-size:12.9px">1400</div><div class="tick" style="left:1308.7px;width:60px;text-align:center;top:955.5px;font-size:12.5px">1400</div><div class="tick" style="right:812.7px;top:793.5px;font-size:12.9px">1600</div><div class="tick" style="left:1375.4px;width:60px;text-align:center;top:955.5px;font-size:12.5px">1600</div><div class="tick" style="right:812.7px;top:860.2px;font-size:12.9px">1800</div><div class="tick" style="left:1442.1px;width:60px;text-align:center;top:955.5px;font-size:12.5px">1800</div><div class="tick" style="right:812.7px;top:926.9px;font-size:12.9px">2000</div><div class="tick" style="left:1508.8px;width:60px;text-align:center;top:955.5px;font-size:12.5px">2000</div>
<div class="a" style="left:-10px;top:28px;width:815px;height:524px;border-radius:7px;box-shadow:0 2px 12px 2px rgba(0,0,0,.75),3px 4px 9px rgba(0,0,0,.5)"></div>
<div class="a" style="left:-10px;top:28px;width:815px;height:524px;border:1px solid #1d1d1d;border-radius:7px;overflow:hidden;background:#dfe6ee">
  <div class="a" style="left:9px;top:0;width:805px;height:29px;background:linear-gradient(90deg,#27476b 0,#28486c 35%,#dadada 35.4%,#d6d6d6 44.5%,#c4cad2 45%,#a9b5c2 50%,#96a5b5 60%,#8a9aab 71%,#3a4d60 73.5%,#26394b 86%,#6b7b8a 87%,#8394a5 100%)"></div>
  <div class="a" style="left:0;top:0;width:814px;height:29px;background:linear-gradient(rgba(255,255,255,.0) 0,rgba(255,255,255,.04) 55%,rgba(255,255,255,.35) 66%,rgba(255,255,255,.8) 74%,rgba(255,255,255,.93) 88%,rgba(255,255,255,.97) 100%)"></div>
  <div class="a" style="left:0;top:1px;width:814px;height:1px;background:rgba(255,255,255,.55)"></div>
  <div class="a" style="left:-30px;top:4px;width:190px;height:22px;border-radius:11px;background:rgba(255,255,255,.55);filter:blur(6px)"></div>
  <!-- right frame -->
  <div class="a" style="left:806px;top:28px;width:7px;height:495px;background:linear-gradient(90deg,#eef1f5,#dfe5ec 60%,#c9d1da)"></div>
  <div class="a" style="left:0;top:516px;width:815px;height:7px;background:linear-gradient(90deg,#fff 0,#e8eaee 4%,#dcdfe4 14%,#f8f8f8 16%,#f4f4f4 50%,#e4e8f0 57%,#dde5f1 75%,#e9edf3 78%,#f7f7f7 86%,#d8d8d8 90%,#9c9c9c 96%,#c8c8c8 100%)"></div>
</div>
<div class="t ui" style="left:0;top:36px;font-size:12.3px">igure 2: Line_scan,Fitting</div>
<!-- caption buttons -->
<div class="a" style="left:695px;top:28px;width:103px;height:19px;border:1px solid #3c4653;border-top:0;border-radius:0 0 5px 5px;overflow:hidden;box-shadow:0 0 0 1px rgba(255,255,255,.55)">
  <div class="a" style="left:0;top:0;width:28px;height:19px;background:linear-gradient(#b6bec8 0,#9aa4b0 45%,#6b7785 50%,#7d8996 80%,#a4aeb9 100%)"></div>
  <div class="a" style="left:28px;top:0;width:27px;height:19px;background:linear-gradient(#b6bec8 0,#9aa4b0 45%,#6b7785 50%,#7d8996 80%,#a4aeb9 100%);border-left:1px solid #3c4653"></div>
  <div class="a" style="left:55px;top:0;width:48px;height:19px;background:linear-gradient(#e8a99b 0,#d98471 40%,#c5432a 50%,#c64a30 75%,#dd7d55 100%);border-left:1px solid #3c2a2a"></div>
</div>
<div class="a" style="left:704px;top:37px;width:12px;height:5px;background:#fff;border:1px solid #4a5565;border-radius:1px"></div>
<div class="a" style="left:731px;top:32px;width:12px;height:10px;border:1px solid #4a5565;border-radius:1px;background:#fff"></div>
<div class="a" style="left:734px;top:35px;width:6px;height:4px;border:1px solid #4a5565;background:#8a95a3"></div>
<svg class="a" style="left:767px;top:31px" width="14" height="12" viewBox="0 0 14 12"><path d="M.6 1h4.4l2 2.5L9 1h4.4L9.4 6l4 5H9L7 8.5 5 11H.6l4-5Z" fill="#fff" stroke="#5a3030" stroke-width="1"/></svg>
<!-- client -->
<div class="a" style="left:-2px;top:56px;width:800px;height:489px;border:1px solid #5a5a5a;background:#f0f0f0"></div>
<div class="a menu" style="left:0;top:57px;width:797px;height:25px"></div>
<div class="a" style="left:0;top:82px;width:797px;height:1px;background:#a0a0a0"></div>
<div class="a" style="left:0;top:109px;width:797px;height:1px;background:#a0a0a0"></div>
<div class="t ui" style="left:16.5px;top:64px">Edit</div><div class="t ui" style="left:53px;top:64px">View</div><div class="t ui" style="left:93.5px;top:64px">Insert</div><div class="t ui" style="left:139.5px;top:64px">Tools</div><div class="t ui" style="left:184.5px;top:64px">Desktop</div><div class="t ui" style="left:243px;top:64px">Window</div><div class="t ui" style="left:304px;top:64px">Help</div>
<svg class="a" style="left:784px;top:65px" width="8" height="8" viewBox="0 0 8 8"><path d="M1.2 1.6L5 5.4" stroke="#000" stroke-width="1.4" fill="none"/><path d="M2.4 6.8H6.8V2.4Z" fill="#000"/></svg>
<svg class="a" style="left:-1px;top:87px" width="16" height="16" viewBox="0 0 16 16"><path d="M.6 4.5h4.6l1.3 1.4H12V14H.6Z" fill="#f0cf62" stroke="#b98f1f" stroke-width="1"/><path d="M.8 14L3 7.6H14.6L12.3 14Z" fill="#fbe9a0" stroke="#b98f1f" stroke-width="1"/><path d="M7.5 3.6C9 1.6 11.6 1.4 13 3.6M13.6 .9v3.2h-3.1" fill="none" stroke="#6a8fc0" stroke-width="1.2"/></svg><svg class="a" style="left:23px;top:88px" width="15" height="16" viewBox="0 0 15 16"><path d="M.6 1.5H12.6L14.4 3.2V14.4H.6Z" fill="#4545c9" stroke="#2a2a86" stroke-width="1"/><rect x="3" y="2" width="8.5" height="5.5" fill="#f2f2ff"/><rect x="3" y="2" width="8.5" height="5.5" fill="#9a9ae0" opacity=".25"/><rect x="4" y="9.8" width="7" height="4.6" fill="#c9c9dc"/><rect x="5" y="10.8" width="2" height="3" fill="#2a2a86"/></svg><svg class="a" style="left:45px;top:86px" width="16" height="17" viewBox="0 0 16 17"><path d="M4.2 6.5L5.3 1H11L12.5 6.5Z" fill="#e6f0fb" stroke="#93a6bf" stroke-width="1"/><path d="M1.5 7.5C1.5 6 3 6.3 8 6.3S14.5 6 14.5 7.5V12.5H1.5Z" fill="#c9c9c9" stroke="#767676" stroke-width="1"/><path d="M2.5 9.5h11" stroke="#eee" stroke-width="1"/><path d="M3 12.5h10l-.8 3H3.8Z" fill="#e4e4e4" stroke="#767676" stroke-width="1"/><rect x="11.2" y="10.3" width="1.8" height="1.3" fill="#4a4"/></svg><div class="sep" style="left:68px;top:86px;height:20px"></div><svg class="a" style="left:80px;top:87px" width="12" height="17" viewBox="0 0 12 17"><path d="M1.5 1.2V13.4L4.4 10.6L6.6 15.6L8.6 14.7L6.4 9.9H10.2Z" fill="#fff" stroke="#000" stroke-width="1.15" stroke-linejoin="round"/></svg><div class="sep" style="left:99px;top:86px;height:20px"></div><svg class="a" style="left:107px;top:87px" width="17" height="17" viewBox="0 0 17 17"><path d="M9.2 9.2L15.2 14.8" stroke="#8a6a2a" stroke-width="3.4" stroke-linecap="round"/><path d="M9.2 9.2L15.2 14.8" stroke="#e8a33a" stroke-width="2.2" stroke-linecap="round"/><circle cx="6" cy="6" r="4.9" fill="#e3effc" stroke="#7d9dcb" stroke-width="1.3"/><circle cx="6" cy="6" r="3.4" fill="#f4f9ff"/><path d="M3.6 6h4.8M6 3.6v4.8" stroke="#2546a5" stroke-width="1.3"/></svg><svg class="a" style="left:130px;top:87px" width="17" height="17" viewBox="0 0 17 17"><path d="M9.2 9.2L15.2 14.8" stroke="#8a6a2a" stroke-width="3.4" stroke-linecap="round"/><path d="M9.2 9.2L15.2 14.8" stroke="#e8a33a" stroke-width="2.2" stroke-linecap="round"/><circle cx="6" cy="6" r="4.9" fill="#e3effc" stroke="#7d9dcb" stroke-width="1.3"/><circle cx="6" cy="6" r="3.4" fill="#f4f9ff"/><path d="M3.6 6h4.8" stroke="#2546a5" stroke-width="1.3"/></svg><svg class="a" style="left:153px;top:86.5px" width="17" height="17" viewBox="0 0 17 17"><path d="M4.6 8.8V3.6c0-1.3 1.9-1.3 1.9 0V2.3c0-1.3 2-1.3 2 0V2.9c0-1.3 2-1.3 2 0V4.6c0-1.2 1.9-1.2 1.9 0v5.6c0 2.7-1.2 3.6-1.9 5.6H6.2C5.3 13.6 2.6 11.6 1.9 9.8c-.5-1.2 1-1.9 1.8-.9Z" fill="#fbe0cc" stroke="#2d55a5" stroke-width="1.05" stroke-linejoin="round"/><path d="M6.5 3.6v4M8.5 3v4.6M10.5 4.6v3" stroke="#2d55a5" stroke-width=".8" fill="none"/></svg><svg class="a" style="left:176px;top:87px" width="17" height="17" viewBox="0 0 17 17"><path d="M3.6 3A6.6 6.6 0 1 1 2 8.6" fill="none" stroke="#3b4f77" stroke-width="1.9"/><path d="M.6 .8L5.6 1.6 4.2 6Z" fill="#3b4f77"/><path d="M5.6 7L9 5.6l3.4 1.4v3.8L9 12.2 5.6 10.8Z" fill="#e8eef8" stroke="#51668f" stroke-width="1"/><path d="M5.6 7L9 8.4l3.4-1.4M9 8.4v3.8" fill="none" stroke="#51668f" stroke-width="1"/></svg><svg class="a" style="left:198px;top:86px" width="18" height="18" viewBox="0 0 18 18"><rect x="6.5" y=".5" width="9.6" height="10" fill="#f5f0a6" stroke="#a39a45" stroke-width="1"/><path d="M8.5 3h5.8M8.5 5h5.8M8.5 7h5.8" stroke="#a39a45" stroke-width="1"/><path d="M1.4 3.5C2.2 7 3.3 9.5 5 11.5" fill="none" stroke="#2222dd" stroke-width="1.1" stroke-dasharray="2 1.4"/><path d="M7.5 14.6C10 16 13 16.6 16.5 16.6" fill="none" stroke="#2222dd" stroke-width="1.1" stroke-dasharray="2.4 1.2"/><path d="M5.6 7.6v8.8M1.2 12h8.8" stroke="#000" stroke-width="2.1"/></svg><svg class="a" style="left:222px;top:87px" width="18" height="17" viewBox="0 0 18 17"><path d="M15.8 1.6L8.6 8.8" stroke="#3f5f9f" stroke-width="3.4" stroke-linecap="round"/><path d="M15.8 1.6L8.6 8.8" stroke="#d9e6fb" stroke-width="1.8" stroke-linecap="round" stroke-dasharray="1.6 1.3"/><path d="M8 7.6L10.4 10C8.4 13 5.6 12.4 1.6 15.6 2.4 12 4 9 8 7.6Z" fill="#5a5a5a" stroke="#2c2c2c" stroke-width=".8"/><rect x="11" y="10" width="5.6" height="5.6" fill="#f20d0d"/></svg><svg class="a" style="left:246px;top:94px" width="7" height="5" viewBox="0 0 7 5"><path d="M.4 .5H6.2L3.3 4Z" fill="#222"/></svg><div class="sep" style="left:257px;top:86px;height:20px"></div><svg class="a" style="left:265px;top:87px" width="17" height="17" viewBox="0 0 17 17"><rect x="3.5" y=".6" width="10.5" height="8.4" fill="#dfe9f6" stroke="#4a66a0" stroke-width="1.1"/><rect x="3.5" y=".6" width="10.5" height="2" fill="#4a66a0"/><rect x="1" y="3" width="10.5" height="8.4" fill="#f4f8fd" stroke="#4a66a0" stroke-width="1.1"/><rect x="1" y="3" width="10.5" height="2.2" fill="#4a66a0"/><rect x="2.6" y="10" width="7.6" height="5" rx="2.5" fill="none" stroke="#395587" stroke-width="1.7"/><rect x="8.2" y="10" width="7.6" height="5" rx="2.5" fill="none" stroke="#5576ad" stroke-width="1.7"/><path d="M6 12.5h6" stroke="#dfe9f6" stroke-width="1"/></svg><div class="sep" style="left:288px;top:86px;height:20px"></div><div class="a" style="left:299px;top:87px;width:10px;height:15px;border:1px solid #2a3f8a;background:linear-gradient(#8f8fe8,#8fd0ee 38%,#d8ecb8 60%,#f6e79a 78%,#f6bca0)"></div><svg class="a" style="left:319px;top:87px" width="15" height="15" viewBox="0 0 15 15"><rect x=".6" y=".6" width="13.8" height="13.8" fill="#f2f6fc" stroke="#2a3f8a" stroke-width="1.2"/><rect x="2.4" y="2.8" width="4.4" height="3.6" fill="#ee5555"/><rect x="2.4" y="8.6" width="4.4" height="3.6" fill="#5a6be0"/><path d="M8.6 4.6h4M8.6 10.4h4" stroke="#111" stroke-width="1.3"/></svg><div class="sep" style="left:342px;top:86px;height:20px"></div><div class="a" style="left:353px;top:90px;width:10px;height:10px;background:#9b9b9b;border:1px solid #b4b4b4;border-radius:1.5px;box-shadow:1px 1px 0 #c8c8c8"></div><svg class="a" style="left:373px;top:88px" width="17" height="15" viewBox="0 0 17 15"><rect x=".8" y=".8" width="15.4" height="13" fill="#fff" stroke="#1c2d78" stroke-width="1.5"/><path d="M1 3.2h15" stroke="#1c2d78" stroke-width="1.3"/><path d="M2.6 4v8M14.4 4v8" stroke="#1c2d78" stroke-width="1.6" stroke-dasharray="1.2 1"/><path d="M1.5 12.2h14" stroke="#1c2d78" stroke-width="1.4" stroke-dasharray="1.2 1"/></svg><svg class="a" style="left:0;top:110px" width="797" height="434" viewBox="0 110 797 434"><rect x="80" y="187.5" width="638.75" height="95.5" fill="#fff" stroke="#262626" stroke-width="1"/><path d="M186.46 283v-6.5M186.46 187.5v6.5" stroke="#262626" stroke-width="1"/><path d="M292.92 283v-6.5M292.92 187.5v6.5" stroke="#262626" stroke-width="1"/><path d="M399.38 283v-6.5M399.38 187.5v6.5" stroke="#262626" stroke-width="1"/><path d="M505.83 283v-6.5M505.83 187.5v6.5" stroke="#262626" stroke-width="1"/><path d="M612.29 283v-6.5M612.29 187.5v6.5" stroke="#262626" stroke-width="1"/><path d="M80 235.25h6.5M718.75 235.25h-6.5" stroke="#262626" stroke-width="1"/><path d="M81.5 264.9L83.4 265.4L85.2 264.2L87.1 264.0L89.0 265.4L90.8 265.4L92.7 262.1L94.6 262.5L96.4 262.6L98.3 264.6L100.2 262.2L102.0 264.3L103.9 264.7L105.8 264.9L107.6 264.4L109.5 261.7L111.4 263.3L113.2 260.9L115.1 262.0L117.0 264.3L118.8 263.8L120.7 262.6L122.6 262.1L124.4 261.6L126.3 260.3L128.2 264.5L130.0 262.5L131.9 263.5L133.8 262.8L135.6 263.9L137.5 262.7L139.4 262.9L141.2 260.7L143.1 260.8L145.0 261.9L146.8 262.4L148.7 260.9L150.6 261.5L152.4 260.9L154.3 260.6L156.2 261.3L158.0 261.4L159.9 260.8L161.8 261.1L163.6 261.6L165.5 260.0L167.4 259.8L169.2 261.4L171.1 261.3L173.0 261.2L174.8 260.5L176.7 259.8L178.6 258.7L180.4 260.0L182.3 258.4L184.2 260.1L186.0 259.5L187.9 259.8L189.8 258.7L191.6 258.3L193.5 260.5L195.4 258.2L197.2 259.1L199.1 258.5L201.0 257.6L202.8 259.4L204.7 258.2L206.6 258.9L208.4 257.6L210.3 257.9L212.2 258.6L214.0 259.7L215.9 258.6L217.8 256.7L219.6 258.8L221.5 257.2L223.4 256.6L225.2 256.4L227.1 256.8L229.0 256.2L230.8 257.2L232.7 257.6L234.6 257.3L236.4 256.3L238.3 257.1L240.2 255.8L242.0 256.4L243.9 254.7L245.8 256.9L247.6 257.0L249.5 256.3L251.4 256.9L253.2 256.2L255.1 256.1L257.0 254.9L258.8 256.7L260.7 256.5L262.6 256.1L264.4 254.5L266.3 255.4L268.2 255.4L270.0 254.6L271.9 253.6L273.8 254.7L275.6 256.5L277.5 255.3L279.4 255.2L281.2 254.8L283.1 252.4L285.0 254.6L286.8 254.8L288.7 253.6L290.6 254.0L292.4 252.2L294.3 254.1L296.2 253.3L298.0 252.4L299.9 253.2L301.8 251.8L303.6 252.9L305.5 253.3L307.4 252.9L309.2 252.5L311.1 252.7L313.0 253.0L314.8 251.4L316.7 252.8L318.6 252.2L320.4 253.2L322.3 251.4L324.2 252.5L326.0 252.5L327.9 252.4L329.8 250.8L331.6 252.4L333.5 252.5L335.4 249.3L337.2 252.5L339.1 250.2L341.0 251.4L342.8 250.2L344.7 250.7L346.6 250.3L348.4 249.2L350.3 250.8L352.2 251.6L354.0 251.1L355.9 249.4L357.8 250.4L359.6 248.8L361.5 248.8L363.4 249.0L365.2 248.4L367.1 248.6L369.0 247.9L370.8 248.4L372.7 247.9L374.6 246.4L376.4 248.3L378.3 247.9L380.2 246.3L382.0 248.1L383.9 245.8L385.8 245.6L387.6 244.9L389.5 247.2L391.4 245.0L393.2 246.6L395.1 244.4L397.0 244.9L398.8 247.4L400.7 244.4L402.5 244.3L404.4 244.2L406.3 243.6L408.1 242.9L410.0 244.3L411.9 244.6L413.7 241.1L415.6 244.1L417.5 241.9L419.3 244.8L421.2 241.6L423.1 241.5L424.9 241.0L426.8 240.4L428.7 240.6L430.5 241.9L432.4 240.6L434.3 241.2L436.1 239.7L438.0 239.7L439.9 240.4L441.7 239.8L443.6 240.7L445.5 240.5L447.3 239.0L449.2 239.0L451.1 237.9L452.9 237.1L454.8 239.1L456.7 238.4L458.5 237.3L460.4 238.9L462.3 238.5L464.1 236.4L466.0 235.1L467.9 237.7L469.7 236.4L471.6 236.6L473.5 235.4L475.3 236.3L477.2 236.2L479.1 234.3L480.9 235.4L482.8 235.9L484.7 235.6L486.5 234.2L488.4 233.4L490.3 234.0L492.1 232.8L494.0 232.8L495.9 232.7L497.7 234.1L499.6 232.1L501.5 234.7L503.3 232.9L505.2 230.3L507.1 232.2L508.9 231.1L510.8 232.2L512.7 230.3L514.5 231.7L516.4 231.5L518.3 229.2L520.1 230.5L522.0 231.1L523.9 228.6L525.7 228.8L527.6 230.1L529.5 229.1L531.3 227.2L533.2 228.2L535.1 227.4L536.9 227.6L538.8 228.3L540.7 227.6L542.5 227.3L544.4 225.7L546.3 225.6L548.1 224.8L550.0 225.4L551.9 225.0L553.7 224.8L555.6 225.2L557.5 222.4L559.3 224.3L561.2 223.0L563.1 225.5L564.9 222.6L566.8 222.5L568.7 222.6L570.5 221.6L572.4 223.1L574.3 221.4L576.1 222.1L578.0 221.1L579.9 222.0L581.7 221.9L583.6 221.7L585.5 219.7L587.3 220.8L589.2 218.9L591.1 219.8L592.9 219.1L594.8 219.3L596.7 217.3L598.5 219.4L600.4 218.4L602.3 216.9L604.1 219.7L606.0 217.0L607.9 217.4L609.7 216.1L611.6 217.6L613.5 217.3L615.3 214.9L617.2 214.9L619.1 214.6L620.9 214.3L622.8 212.6L624.7 216.6L626.5 214.0L628.4 213.9L630.3 213.4L632.1 212.3L634.0 212.4L635.9 210.5L637.7 213.3L639.6 211.8L641.5 211.5" fill="none" stroke="#0072bd" stroke-width="1.1" shape-rendering="crispEdges"/><rect x="80" y="392" width="638.75" height="96.5" fill="#fff" stroke="#262626" stroke-width="1"/><path d="M129.70 488.5v-6.5M129.70 392v6.5" stroke="#262626" stroke-width="1"/><path d="M211.05 488.5v-6.5M211.05 392v6.5" stroke="#262626" stroke-width="1"/><path d="M292.40 488.5v-6.5M292.40 392v6.5" stroke="#262626" stroke-width="1"/><path d="M373.75 488.5v-6.5M373.75 392v6.5" stroke="#262626" stroke-width="1"/><path d="M455.10 488.5v-6.5M455.10 392v6.5" stroke="#262626" stroke-width="1"/><path d="M536.45 488.5v-6.5M536.45 392v6.5" stroke="#262626" stroke-width="1"/><path d="M617.80 488.5v-6.5M617.80 392v6.5" stroke="#262626" stroke-width="1"/><path d="M699.15 488.5v-6.5M699.15 392v6.5" stroke="#262626" stroke-width="1"/><path d="M80 465.50h6.5M718.75 465.50h-6.5" stroke="#262626" stroke-width="1"/><path d="M80 438.00h6.5M718.75 438.00h-6.5" stroke="#262626" stroke-width="1"/><path d="M80 410.50h6.5M718.75 410.50h-6.5" stroke="#262626" stroke-width="1"/><path d="M79.5 428.2L83.6 429.2L87.6 430.2L91.7 431.1L95.8 432.1L99.8 433.0L103.9 433.9L108.0 434.8L112.0 435.7L116.1 436.5L120.2 437.3L124.2 438.1L128.3 438.9L132.4 439.7L136.5 440.4L140.5 441.1L144.6 441.8L148.7 442.5L152.7 443.2L156.8 443.8L160.9 444.5L164.9 445.1L169.0 445.7L173.1 446.2L177.1 446.8L181.2 447.3L185.3 447.8L189.3 448.3L193.4 448.7L197.5 449.2L201.5 449.6L205.6 450.0L209.7 450.4L213.7 450.8L217.8 451.1L221.9 451.4L225.9 451.7L230.0 452.0L234.1 452.3L238.1 452.5L242.2 452.8L246.3 453.0L250.3 453.2L254.4 453.3L258.5 453.5L262.5 453.6L266.6 453.7L270.7 453.8L274.7 453.9L278.8 453.9L282.9 453.9L286.9 453.9L291.0 453.9L295.1 453.9L299.2 453.9L303.2 453.8L307.3 453.7L311.4 453.6L315.4 453.4L319.5 453.3L323.6 453.1L327.6 452.9L331.7 452.7L335.8 452.5L339.8 452.2L343.9 452.0L348.0 451.7L352.0 451.4L356.1 451.0L360.2 450.7L364.2 450.3L368.3 449.9L372.4 449.5L376.4 449.1L380.5 448.6L384.6 448.2L388.6 447.7L392.7 447.2L396.8 446.6L400.8 446.1L404.9 445.5L409.0 444.9L413.0 444.3L417.1 443.7L421.2 443.0L425.2 442.4L429.3 441.7L433.4 441.0L437.4 440.2L441.5 439.5L445.6 438.7L449.6 437.9L453.7 437.1L457.8 436.3L461.9 435.5L465.9 434.6L470.0 433.7L474.1 432.8L478.1 431.9L482.2 430.9L486.3 429.9L490.3 429.0L494.4 428.0L498.5 426.9L502.5 425.9L506.6 424.8L510.7 423.7L514.7 422.6L518.8 421.5L522.9 420.3L526.9 419.2L531.0 418.0L535.1 416.8L539.1 415.6L543.2 414.3L547.3 413.0L551.3 411.8L555.4 410.5L559.5 409.1L563.5 407.8L567.6 406.4L571.7 405.0L575.7 403.6L579.8 402.2L583.9 400.8L587.9 399.3L592.0 397.8L596.1 396.3L600.1 394.8L604.2 393.2" fill="none" stroke="#0072bd" stroke-width="1.1" shape-rendering="crispEdges"/><path d="M294.0 450.0L295.5 450.0L295.5 450.0L297.0 450.0L297.0 451.0L298.5 451.0L298.5 449.0L300.0 449.0L300.0 450.0L301.5 450.0L301.5 451.0L303.0 451.0L303.0 449.0L304.5 449.0L304.5 448.0L306.0 448.0L306.0 449.0L307.5 449.0L307.5 449.0L309.0 449.0L309.0 449.0L310.5 449.0L310.5 449.0L312.0 449.0L312.0 449.0L313.5 449.0L313.5 449.0L315.0 449.0L315.0 449.0L316.5 449.0L316.5 449.0L318.0 449.0L318.0 449.0L319.5 449.0L319.5 448.0L321.0 448.0L321.0 447.0L322.5 447.0L322.5 448.0L324.0 448.0L324.0 449.0L325.5 449.0L325.5 447.0L327.0 447.0L327.0 448.0L328.5 448.0L328.5 448.0L330.0 448.0L330.0 447.0L331.5 447.0L331.5 447.0L333.0 447.0L333.0 448.0L334.5 448.0L334.5 447.0L336.0 447.0L336.0 447.0L337.5 447.0L337.5 447.0L339.0 447.0L339.0 447.0L340.5 447.0L340.5 446.0L342.0 446.0L342.0 447.0L343.5 447.0L343.5 446.0L345.0 446.0L345.0 446.0L346.5 446.0L346.5 445.0L348.0 445.0L348.0 445.0L349.5 445.0L349.5 446.0L351.0 446.0L351.0 447.0L352.5 447.0L352.5 445.0L354.0 445.0L354.0 444.0L355.5 444.0L355.5 445.0L357.0 445.0L357.0 445.0L358.5 445.0L358.5 445.0L360.0 445.0L360.0 445.0L361.5 445.0L361.5 444.0L363.0 444.0L363.0 445.0L364.5 445.0L364.5 445.0L366.0 445.0L366.0 445.0L367.5 445.0L367.5 444.0L369.0 444.0L369.0 445.0L370.5 445.0L370.5 443.0L372.0 443.0L372.0 443.0L373.5 443.0L373.5 443.0L375.0 443.0L375.0 444.0L376.5 444.0L376.5 444.0L378.0 444.0L378.0 443.0L379.5 443.0L379.5 444.0L381.0 444.0L381.0 442.0L382.5 442.0L382.5 444.0L384.0 444.0L384.0 443.0L385.5 443.0L385.5 442.0L387.0 442.0L387.0 444.0L388.5 444.0L388.5 443.0L390.0 443.0L390.0 443.0L391.5 443.0L391.5 443.0L393.0 443.0L393.0 442.0L394.5 442.0L394.5 442.0L396.0 442.0L396.0 441.0L397.5 441.0L397.5 442.0L399.0 442.0L399.0 441.0L400.5 441.0L400.5 441.0L402.0 441.0L402.0 441.0L403.5 441.0L403.5 440.0L405.0 440.0L405.0 441.0L406.5 441.0L406.5 441.0L408.0 441.0L408.0 441.0L409.5 441.0L409.5 440.0L411.0 440.0L411.0 441.0L412.5 441.0L412.5 440.0L414.0 440.0L414.0 440.0L415.5 440.0L415.5 440.0L417.0 440.0L417.0 440.0L418.5 440.0L418.5 441.0L420.0 441.0L420.0 438.0L421.5 438.0L421.5 439.0L423.0 439.0L423.0 438.0L424.5 438.0L424.5 439.0L426.0 439.0L426.0 438.0L427.5 438.0L427.5 437.0L429.0 437.0L429.0 437.0L430.5 437.0L430.5 438.0L432.0 438.0L432.0 438.0L433.5 438.0L433.5 437.0L435.0 437.0L435.0 437.0L436.5 437.0L436.5 436.0L438.0 436.0L438.0 435.0L439.5 435.0L439.5 436.0L441.0 436.0L441.0 436.0L442.5 436.0L442.5 436.0L444.0 436.0L444.0 435.0L445.5 435.0L445.5 435.0L447.0 435.0L447.0 435.0L448.5 435.0L448.5 435.0L450.0 435.0L450.0 434.0L451.5 434.0L451.5 435.0L453.0 435.0L453.0 433.0L454.5 433.0L454.5 432.0L456.0 432.0L456.0 433.0L457.5 433.0L457.5 432.0L459.0 432.0L459.0 432.0L460.5 432.0L460.5 432.0L462.0 432.0L462.0 430.0L463.5 430.0L463.5 431.0L465.0 431.0L465.0 431.0L466.5 431.0L466.5 430.0L468.0 430.0L468.0 430.0L469.5 430.0L469.5 430.0L471.0 430.0L471.0 429.0L472.5 429.0L472.5 430.0L474.0 430.0L474.0 428.0L475.5 428.0L475.5 428.0L477.0 428.0L477.0 428.0L478.5 428.0L478.5 429.0L480.0 429.0L480.0 427.0L481.5 427.0L481.5 426.0L483.0 426.0L483.0 426.0L484.5 426.0L484.5 425.0L486.0 425.0L486.0 425.0L487.5 425.0L487.5 426.0L489.0 426.0L489.0 426.0L490.5 426.0L490.5 425.0L492.0 425.0L492.0 425.0L493.5 425.0L493.5 424.0L495.0 424.0L495.0 424.0L496.5 424.0L496.5 424.0L498.0 424.0L498.0 423.0L499.5 423.0L499.5 423.0L501.0 423.0L501.0 423.0L502.5 423.0L502.5 422.0L504.0 422.0L504.0 422.0L505.5 422.0L505.5 422.0L507.0 422.0L507.0 420.0L508.5 420.0L508.5 430.0L507.0 430.0L507.0 430.0L505.5 430.0L505.5 430.0L504.0 430.0L504.0 429.0L502.5 429.0L502.5 431.0L501.0 431.0L501.0 431.0L499.5 431.0L499.5 431.0L498.0 431.0L498.0 431.0L496.5 431.0L496.5 432.0L495.0 432.0L495.0 432.0L493.5 432.0L493.5 433.0L492.0 433.0L492.0 434.0L490.5 434.0L490.5 434.0L489.0 434.0L489.0 434.0L487.5 434.0L487.5 433.0L486.0 433.0L486.0 435.0L484.5 435.0L484.5 436.0L483.0 436.0L483.0 435.0L481.5 435.0L481.5 435.0L480.0 435.0L480.0 436.0L478.5 436.0L478.5 436.0L477.0 436.0L477.0 437.0L475.5 437.0L475.5 436.0L474.0 436.0L474.0 436.0L472.5 436.0L472.5 438.0L471.0 438.0L471.0 438.0L469.5 438.0L469.5 438.0L468.0 438.0L468.0 438.0L466.5 438.0L466.5 439.0L465.0 439.0L465.0 439.0L463.5 439.0L463.5 440.0L462.0 440.0L462.0 439.0L460.5 439.0L460.5 440.0L459.0 440.0L459.0 440.0L457.5 440.0L457.5 441.0L456.0 441.0L456.0 442.0L454.5 442.0L454.5 442.0L453.0 442.0L453.0 443.0L451.5 443.0L451.5 442.0L450.0 442.0L450.0 442.0L448.5 442.0L448.5 443.0L447.0 443.0L447.0 443.0L445.5 443.0L445.5 442.0L444.0 442.0L444.0 444.0L442.5 444.0L442.5 444.0L441.0 444.0L441.0 444.0L439.5 444.0L439.5 443.0L438.0 443.0L438.0 445.0L436.5 445.0L436.5 446.0L435.0 446.0L435.0 446.0L433.5 446.0L433.5 445.0L432.0 445.0L432.0 446.0L430.5 446.0L430.5 446.0L429.0 446.0L429.0 445.0L427.5 445.0L427.5 446.0L426.0 446.0L426.0 447.0L424.5 447.0L424.5 446.0L423.0 446.0L423.0 447.0L421.5 447.0L421.5 447.0L420.0 447.0L420.0 449.0L418.5 449.0L418.5 449.0L417.0 449.0L417.0 449.0L415.5 449.0L415.5 447.0L414.0 447.0L414.0 448.0L412.5 448.0L412.5 447.0L411.0 447.0L411.0 449.0L409.5 449.0L409.5 448.0L408.0 448.0L408.0 448.0L406.5 448.0L406.5 448.0L405.0 448.0L405.0 449.0L403.5 449.0L403.5 450.0L402.0 450.0L402.0 449.0L400.5 449.0L400.5 450.0L399.0 450.0L399.0 450.0L397.5 450.0L397.5 449.0L396.0 449.0L396.0 450.0L394.5 450.0L394.5 449.0L393.0 449.0L393.0 450.0L391.5 450.0L391.5 452.0L390.0 452.0L390.0 451.0L388.5 451.0L388.5 450.0L387.0 450.0L387.0 451.0L385.5 451.0L385.5 452.0L384.0 452.0L384.0 452.0L382.5 452.0L382.5 451.0L381.0 451.0L381.0 451.0L379.5 451.0L379.5 452.0L378.0 452.0L378.0 452.0L376.5 452.0L376.5 453.0L375.0 453.0L375.0 452.0L373.5 452.0L373.5 452.0L372.0 452.0L372.0 452.0L370.5 452.0L370.5 452.0L369.0 452.0L369.0 452.0L367.5 452.0L367.5 453.0L366.0 453.0L366.0 453.0L364.5 453.0L364.5 453.0L363.0 453.0L363.0 453.0L361.5 453.0L361.5 452.0L360.0 452.0L360.0 454.0L358.5 454.0L358.5 453.0L357.0 453.0L357.0 454.0L355.5 454.0L355.5 452.0L354.0 452.0L354.0 453.0L352.5 453.0L352.5 454.0L351.0 454.0L351.0 454.0L349.5 454.0L349.5 455.0L348.0 455.0L348.0 453.0L346.5 453.0L346.5 455.0L345.0 455.0L345.0 453.0L343.5 453.0L343.5 454.0L342.0 454.0L342.0 455.0L340.5 455.0L340.5 454.0L339.0 454.0L339.0 454.0L337.5 454.0L337.5 455.0L336.0 455.0L336.0 456.0L334.5 456.0L334.5 454.0L333.0 454.0L333.0 455.0L331.5 455.0L331.5 454.0L330.0 454.0L330.0 457.0L328.5 457.0L328.5 455.0L327.0 455.0L327.0 455.0L325.5 455.0L325.5 456.0L324.0 456.0L324.0 456.0L322.5 456.0L322.5 455.0L321.0 455.0L321.0 457.0L319.5 457.0L319.5 457.0L318.0 457.0L318.0 457.0L316.5 457.0L316.5 456.0L315.0 456.0L315.0 457.0L313.5 457.0L313.5 457.0L312.0 457.0L312.0 457.0L310.5 457.0L310.5 457.0L309.0 457.0L309.0 458.0L307.5 458.0L307.5 456.0L306.0 456.0L306.0 456.0L304.5 456.0L304.5 458.0L303.0 458.0L303.0 458.0L301.5 458.0L301.5 458.0L300.0 458.0L300.0 457.0L298.5 457.0L298.5 458.0L297.0 458.0L297.0 459.0L295.5 459.0L295.5 458.0L294.0 458.0Z" fill="#ff0000" stroke="#ff0000" stroke-width="1" stroke-linejoin="miter"/><path d="M290.0 450.0l9 9M290.0 459.0l9 -9" stroke="#ff0000" stroke-width="1.8"/><path d="M502.5 421.0l9 9M502.5 430.0l9 -9" stroke="#ff0000" stroke-width="1.8"/></svg><div class="tick" style="left:40.0px;width:80px;text-align:center;top:290.8px;font-size:13.33px;">0</div><div class="tick" style="left:146.5px;width:80px;text-align:center;top:290.8px;font-size:13.33px;">0.5</div><div class="tick" style="left:252.9px;width:80px;text-align:center;top:290.8px;font-size:13.33px;">1</div><div class="tick" style="left:359.4px;width:80px;text-align:center;top:290.8px;font-size:13.33px;">1.5</div><div class="tick" style="left:465.8px;width:80px;text-align:center;top:290.8px;font-size:13.33px;">2</div><div class="tick" style="left:572.3px;width:80px;text-align:center;top:290.8px;font-size:13.33px;">2.5</div><div class="tick" style="left:678.8px;width:80px;text-align:center;top:290.8px;font-size:13.33px;">3</div><div class="tick" style="right:1605.0px;top:181.8px;font-size:13.33px;">1</div><div class="tick" style="right:1605.0px;top:229.8px;font-size:13.33px;">0.5</div><div class="tick" style="right:1605.0px;top:277.3px;font-size:13.33px;">0</div><div class="tick" style="left:89.2px;width:80px;text-align:center;top:496.8px;font-size:13.33px;">-2</div><div class="tick" style="left:170.5px;width:80px;text-align:center;top:496.8px;font-size:13.33px;">-1</div><div class="tick" style="left:252.4px;width:80px;text-align:center;top:496.8px;font-size:13.33px;">0</div><div class="tick" style="left:333.8px;width:80px;text-align:center;top:496.8px;font-size:13.33px;">1</div><div class="tick" style="left:415.1px;width:80px;text-align:center;top:496.8px;font-size:13.33px;">2</div><div class="tick" style="left:496.4px;width:80px;text-align:center;top:496.8px;font-size:13.33px;">3</div><div class="tick" style="left:577.8px;width:80px;text-align:center;top:496.8px;font-size:13.33px;">4</div><div class="tick" style="left:659.1px;width:80px;text-align:center;top:496.8px;font-size:13.33px;">5</div><div class="tick" style="right:1605.0px;top:404.8px;font-size:13.33px;">10</div><div class="tick" style="right:1605.0px;top:432.3px;font-size:13.33px;">5</div><div class="tick" style="right:1605.0px;top:459.8px;font-size:13.33px;">0</div><div class="tick" style="left:81px;top:172px;font-size:13.33px"><span style="font-size:13.5px;position:relative;top:1px;font-family:'DejaVu Sans',sans-serif;font-weight:200">×</span><span style="margin-left:1px">10</span><span style="font-size:10.7px;position:relative;top:-6.5px">-6</span></div><div class="tick" style="left:81px;top:377px;font-size:13.33px"><span style="font-size:13.5px;position:relative;top:1px;font-family:'DejaVu Sans',sans-serif;font-weight:200">×</span><span style="margin-left:1px">10</span><span style="font-size:10.7px;position:relative;top:-6.5px">-7</span></div><div class="tick" style="left:683px;top:314px;font-size:13.33px"><span style="font-size:13.5px;position:relative;top:1px;font-family:'DejaVu Sans',sans-serif;font-weight:200">×</span><span style="margin-left:1px">10</span><span style="font-size:10.7px;position:relative;top:-6.5px">-3</span></div><div class="tick" style="left:683px;top:519px;font-size:13.33px"><span style="font-size:13.5px;position:relative;top:1px;font-family:'DejaVu Sans',sans-serif;font-weight:200">×</span><span style="margin-left:1px">10</span><span style="font-size:10.7px;position:relative;top:-6.5px">-3</span></div><div class="t" style="left:99px;width:600px;text-align:center;top:166.5px;font-size:15px;font-weight:bold;color:#000">Line scan</div><div class="t" style="left:99px;width:600px;text-align:center;top:331.5px;font-size:15px;font-weight:bold;color:#000">Fitting</div><div class="t" style="left:99px;width:600px;text-align:center;top:351.5px;font-size:15px;font-weight:bold;color:#000">Radius of curvature = 6.9109m</div><div class="t" style="left:99px;width:600px;text-align:center;top:371.5px;font-size:15px;font-weight:bold;color:#000">Fitting Score = 0.033142</div>
<div class="a" style="left:15px;top:602px;width:672px;height:317px;border-radius:7px;box-shadow:0 1px 7px 0 rgba(0,0,0,.45),2px 3px 6px rgba(0,0,0,.22)"></div>
<div class="a" style="left:15px;top:602px;width:672px;height:317px;border:1px solid #4e4e4e;border-radius:7px;background:linear-gradient(115deg,#fdfdfd 0,#fdfdfd 14%,#f3f3f3 17%,#f5f5f5 22%,#fefefe 25%,#fefefe 29%,#f2f2f2 32%,#f4f4f4 38%,#fdfdfd 42%,#fdfdfd 100%)"></div>
<!-- icon -->
<div class="a" style="left:23px;top:609px;width:16px;height:16px;background:linear-gradient(#fff,#ececec);border:1px solid #a4abb9;border-top:2px solid #7ea6d8;border-radius:1px"></div>
<svg class="a" style="left:24.5px;top:611.5px" width="13.5" height="13" viewBox="0 0 17 17"><path d="M0 9.5 L4 7.5 L7.5 11 L4.5 13.5Z" fill="#4a8fd0"/><path d="M4 7.5 C7 5 8.5 1 10.5 0.5 C12 0.5 13.5 6 16.5 12.5 C14.5 11 13 10.5 11.5 12 C10 13.5 9 15.5 7 16 L4.5 13.5 L7.5 11Z" fill="#e2581d"/><path d="M10.5 0.5 C12 0.5 13.5 6 16.5 12.5 C14.5 11 13 10.5 11.5 12 C11.5 8 11 3 10.5 0.5Z" fill="#f9b233"/></svg>
<div class="t ui" style="left:44px;top:611px">Slider</div>
<!-- caption buttons -->
<div class="a" style="left:577px;top:602px;width:104px;height:20px;border:1px solid #8d93a0;border-top:0;border-radius:0 0 5px 5px;background:linear-gradient(#fff,#fbfcfe 50%,#f1f4fa 100%)"></div>
<div class="a" style="left:605px;top:603px;width:1px;height:18px;background:#a9aeb9"></div>
<div class="a" style="left:632px;top:603px;width:1px;height:18px;background:#a9aeb9"></div>
<div class="a" style="left:586px;top:612px;width:11px;height:4px;background:#fcfcfc;border:1px solid #4c5366;border-radius:1px"></div>
<div class="a" style="left:613px;top:607px;width:11px;height:9px;border:1px solid #c3c7d0;border-radius:1px;background:#fcfcfc"></div>
<div class="a" style="left:616px;top:610px;width:5px;height:3px;border:1px solid #c3c7d0;background:#fff"></div>
<svg class="a" style="left:650px;top:606px" width="13" height="11" viewBox="0 0 13 11"><path d="M.6 .8h4.2l1.7 2.2L8.2 .8h4.2L8.7 5.5l3.7 4.7H8.2L6.5 8 4.8 10.2H.6l3.7-4.7Z" fill="#fdfdfd" stroke="#4c5366" stroke-width="1"/></svg>
<!-- client -->
<div class="a" style="left:22px;top:631px;width:658px;height:281px;border:1px solid #6e6e6e;background:#f0f0f0"></div>
<div class="t" style="left:69px;top:660px;font-size:16px">Y</div>
<div class="t" style="left:228px;top:652px;font-size:18.6px">move line</div>
<div class="t" style="left:337px;top:652px;font-size:16px">X: 763</div>
<div class="t" style="left:578.5px;top:656px;font-size:16px;letter-spacing:-.55px">In Y verkürzen</div>
<div class="a" style="left:49px;top:681px;width:51px;height:150px;background:#e6e6e6;border-left:1px solid #777;border-top:1px solid #fff;border-right:1px solid #6a6a6a;border-bottom:1px solid #6a6a6a"></div><div class="a" style="left:49px;top:681px;width:50px;height:15px;background:#f0f0f0;border-top:1px solid #fff;border-left:1px solid #fff;border-right:1px solid #8a8a8a;border-bottom:1px solid #6a6a6a"></div><svg class="a" style="left:70.0px;top:686px" width="8" height="5"><path d="M4 .3L7.6 4.4H.4Z" fill="#606060"/></svg><div class="a" style="left:49px;top:816px;width:50px;height:14px;background:#f0f0f0;border-top:1px solid #fff;border-left:1px solid #fff;border-right:1px solid #8a8a8a"></div><svg class="a" style="left:70.0px;top:821px" width="8" height="5"><path d="M.4 .4H7.6L4 4.6Z" fill="#606060"/></svg><div class="a" style="left:49px;top:752px;width:50px;height:9px;background:#f0f0f0;border-top:1px solid #fff;border-left:1px solid #fff;border-right:1px solid #8a8a8a;border-bottom:1px solid #6a6a6a"></div><div class="a" style="left:603px;top:681px;width:51px;height:150px;background:#e6e6e6;border-left:1px solid #777;border-top:1px solid #fff;border-right:1px solid #6a6a6a;border-bottom:1px solid #6a6a6a"></div><div class="a" style="left:603px;top:681px;width:50px;height:15px;background:#f0f0f0;border-top:1px solid #fff;border-left:1px solid #fff;border-right:1px solid #8a8a8a;border-bottom:1px solid #6a6a6a"></div><svg class="a" style="left:624.0px;top:686px" width="8" height="5"><path d="M4 .3L7.6 4.4H.4Z" fill="#606060"/></svg><div class="a" style="left:603px;top:816px;width:50px;height:14px;background:#f0f0f0;border-top:1px solid #fff;border-left:1px solid #fff;border-right:1px solid #8a8a8a"></div><svg class="a" style="left:624.0px;top:821px" width="8" height="5"><path d="M.4 .4H7.6L4 4.6Z" fill="#606060"/></svg><div class="a" style="left:603px;top:752px;width:50px;height:9px;background:#f0f0f0;border-top:1px solid #fff;border-left:1px solid #fff;border-right:1px solid #8a8a8a;border-bottom:1px solid #6a6a6a"></div>
<!-- horizontal slider -->
<div class="a" style="left:122px;top:683px;width:291px;height:48px;background:#e6e6e6;border-left:1px solid #fff;border-top:1px solid #fff;border-right:1px solid #6a6a6a;border-bottom:1px solid #6a6a6a"></div>
<div class="a" style="left:122px;top:683px;width:15px;height:46px;background:#f0f0f0;border-top:1px solid #fff;border-left:1px solid #fff;border-right:1px solid #6a6a6a"></div>
<svg class="a" style="left:127px;top:702px" width="5" height="8"><path d="M.3 4L4.5 .4V7.6Z" fill="#606060"/></svg>
<div class="a" style="left:397px;top:683px;width:15px;height:46px;background:#f0f0f0;border-top:1px solid #fff;border-left:1px solid #fff;border-right:1px solid #8a8a8a"></div>
<svg class="a" style="left:402px;top:702px" width="5" height="8"><path d="M4.7 4L.5 .4V7.6Z" fill="#606060"/></svg>
<div class="a" style="left:255px;top:683px;width:22px;height:46px;background:#f0f0f0;border-top:1px solid #fff;border-left:1px solid #fff;border-right:1px solid #6a6a6a"></div>
<div class="btn" style="left:437px;top:682px;width:148px;height:48px;font-size:15.7px;line-height:49px">Werte speichern</div>
<div class="t" style="left:137.5px;top:762px;font-size:16px">X1:</div>
<div class="t" style="left:286.5px;top:762px;font-size:16px">X2:</div>
<div class="btn" style="left:137px;top:782px;width:99px;height:49px;font-size:11px;line-height:49px">Interval Grenze 1</div>
<div class="btn" style="left:287px;top:782px;width:99px;height:49px;font-size:11px;line-height:49px">Interval Grenze 2</div>
<div class="btn" style="left:437px;top:782px;width:122px;height:49px;font-size:11px;line-height:49px">Mittelwert berechnen</div>
<div class="t" style="left:437px;top:838px;font-size:16px;letter-spacing:-.5px">Mittelwert:</div>
<div class="btn" style="left:51px;top:859px;width:149px;height:49px;font-size:11px;line-height:49px">Auto Linescan</div>
<!-- bottom edge strip -->
<div class="a" style="left:0;top:1010px;width:1679px;height:1px;background:#555"></div>
<div class="a" style="left:0;top:1011px;width:1679px;height:2px;background:linear-gradient(90deg,#5c6d90 0,#6f80a3 3%,#7a89aa 7%,#f2f2f2 7.3%,#fafafa 10.2%,#8a97b3 10.5%,#9aa5be 18.3%,#c9868c 18.6%,#c9686e 20%,#cc8c92 21.7%,#f4f4f4 22%,#fbfbfb 25%,#dedede 25.3%,#e2e2e2 60%,#dcdcdc 98.8%,#7f93b8 99.2%,#91a4c6 100%)"></div>
</body></html>
